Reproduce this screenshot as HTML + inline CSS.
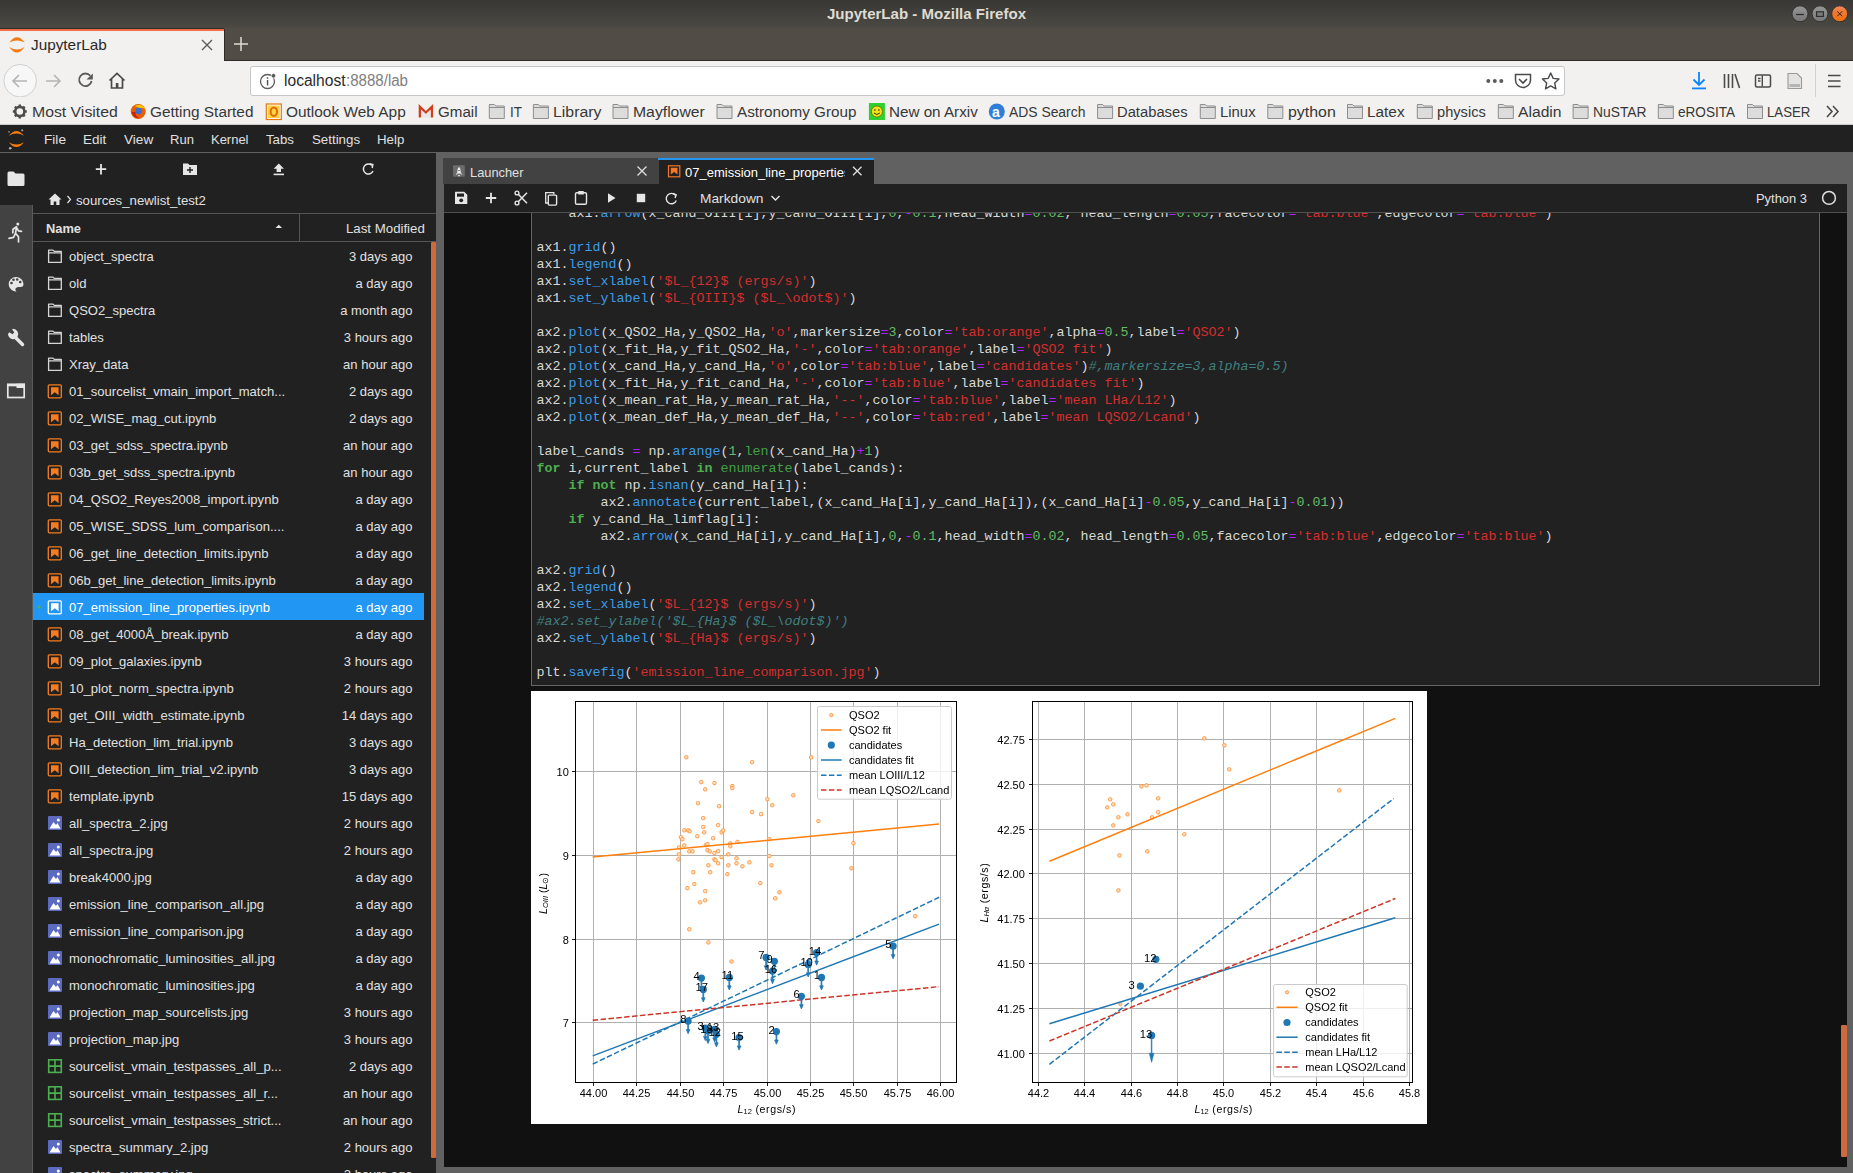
<!DOCTYPE html>
<html><head><meta charset="utf-8"><title>JupyterLab</title>
<style>
html,body{margin:0;padding:0;}
body{width:1853px;height:1173px;overflow:hidden;position:relative;background:#212121;font-family:"Liberation Sans",sans-serif;}
.t{position:absolute;white-space:nowrap;}
.code{position:absolute;white-space:pre;font-family:"Liberation Mono",monospace;font-size:13.33px;line-height:17px;color:#d8d8d8;}
.code b{font-weight:bold;}
</style></head><body>
<div style="position:absolute;left:0;top:0;width:1853px;height:29px;background:linear-gradient(#383734,#4c4a44);"></div>
<div class="t" style="left:827.0px;top:5.9px;font-size:14.5px;color:#dfdbd2;line-height:16.67px;font-weight:bold;transform:scaleX(1.0378);transform-origin:0 0;">JupyterLab - Mozilla Firefox</div>
<svg style="position:absolute;left:1785px;top:0" width="68" height="29" viewBox="1785 0 68 29">
<defs><linearGradient id="wb" x1="0" y1="0" x2="0" y2="1"><stop offset="0" stop-color="#969696"/><stop offset="1" stop-color="#777777"/></linearGradient>
<linearGradient id="wc" x1="0" y1="0" x2="0" y2="1"><stop offset="0" stop-color="#f58a68"/><stop offset="0.35" stop-color="#f07a30"/><stop offset="1" stop-color="#f07010"/></linearGradient></defs>
<circle cx="1800" cy="13.8" r="8" fill="url(#wb)" stroke="#2e2d2a" stroke-width="0.9"/>
<line x1="1796" y1="14.5" x2="1803.8" y2="14.5" stroke="#2a2a2a" stroke-width="1.3"/>
<circle cx="1820" cy="13.8" r="8" fill="url(#wb)" stroke="#2e2d2a" stroke-width="0.9"/>
<rect x="1816.6" y="11.8" width="6.8" height="4.6" fill="#7a7a7a" stroke="#2a2a2a" stroke-width="1.1"/>
<circle cx="1839.7" cy="13.8" r="8" fill="url(#wc)" stroke="#2e2d2a" stroke-width="0.9"/>
<path d="M1837.3 11.4 L1842.1 16.2 M1842.1 11.4 L1837.3 16.2" stroke="#2a1a10" stroke-width="1"/>
</svg>
<div style="position:absolute;left:0;top:28px;width:1853px;height:33px;background:#514d46;"></div>
<div style="position:absolute;left:0;top:28px;width:224px;height:1px;background:#2d2c29;"></div>
<div style="position:absolute;left:0;top:29px;width:224px;height:2px;background:#f26f47;"></div>
<div style="position:absolute;left:0;top:31px;width:224px;height:31px;background:#f2f1ef;"></div>
<div style="position:absolute;left:224px;top:29px;width:1px;height:32px;background:#2c2b28;"></div>
<div style="position:absolute;left:225px;top:60px;width:1628px;height:1px;background:#2c2b28;"></div>
<svg style="position:absolute;left:8px;top:36px" width="18" height="18" viewBox="0 0 18 18">
<path d="M1.3 6.5 Q9 -4.1 16.6 6.5 Q9 2.5 1.3 6.5 Z" fill="#f57a10"/>
<path d="M1.3 11 Q9 22.2 16.6 11 Q9 16 1.3 11 Z" fill="#f57a10"/></svg>
<div class="t" style="left:31.0px;top:36.4px;font-size:15px;color:#2a2a2a;line-height:17.25px;transform:scaleX(1.0213);transform-origin:0 0;">JupyterLab</div>
<svg style="position:absolute;left:200px;top:38px" width="14" height="14" viewBox="0 0 14 14"><path d="M2 2 L12 12 M12 2 L2 12" stroke="#5a5a5a" stroke-width="1.4"/></svg>
<svg style="position:absolute;left:233px;top:36px" width="16" height="16" viewBox="0 0 16 16"><path d="M8 1 V15 M1 8 H15" stroke="#dedbd4" stroke-width="1.5"/></svg>
<div style="position:absolute;left:0;top:61px;width:1853px;height:64px;background:#f2f1ef;"></div>
<svg style="position:absolute;left:0;top:61px" width="140" height="36" viewBox="0 61 140 36">
<circle cx="20.2" cy="80.7" r="16.3" fill="#f7f7f7" stroke="#cfcfcf" stroke-width="1"/>
<path d="M27 81 H13 M19 75 L13 81 L19 87" fill="none" stroke="#b4b4b4" stroke-width="1.6"/>
<path d="M46 81 H60 M54 75 L60 81 L54 87" fill="none" stroke="#b4b4b4" stroke-width="1.6"/>
<path d="M90.3 75.8 A6.3 6.3 0 1 0 91.6 81" fill="none" stroke="#5a5a5a" stroke-width="1.8"/>
<path d="M86.5 79.5 H92.8 V73.5 Z" fill="#5a5a5a"/>
<path d="M109.5 80.5 L117 73.5 L124.5 80.5 M111.5 79 V88 H122.5 V79" fill="none" stroke="#4a4a4a" stroke-width="1.7"/>
<rect x="115.8" y="83" width="2.6" height="5" fill="#4a4a4a"/>
</svg>
<div style="position:absolute;left:0;top:124px;width:1853px;height:1px;background:#cacaca;"></div>
<div style="position:absolute;left:250px;top:66px;width:1315px;height:30px;background:#fff;border:1px solid #c6c6c6;border-radius:3px;box-sizing:border-box;"></div>
<svg style="position:absolute;left:258px;top:72px" width="20" height="20" viewBox="0 0 20 20">
<circle cx="9.5" cy="9.5" r="7" fill="none" stroke="#5a5a5a" stroke-width="1.3"/>
<rect x="8.8" y="8" width="1.5" height="5.5" fill="#5a5a5a"/><rect x="8.8" y="5.2" width="1.5" height="1.6" fill="#5a5a5a"/>
<circle cx="15.5" cy="3.8" r="2.3" fill="#5a5a5a" stroke="#fff" stroke-width="0.8"/></svg>
<div class="t" style="left:283.5px;top:72.3px;font-size:16px;color:#2a2a2a;line-height:18.40px;transform:scaleX(0.9739);transform-origin:0 0;">localhost</div>
<div class="t" style="left:346.0px;top:72.3px;font-size:16px;color:#808080;line-height:18.40px;transform:scaleX(0.9417);transform-origin:0 0;">:8888/lab</div>
<svg style="position:absolute;left:1480px;top:66px" width="90" height="30" viewBox="1480 66 90 30">
<circle cx="1488.3" cy="81" r="2" fill="#5a5a5a"/><circle cx="1494.8" cy="81" r="2" fill="#5a5a5a"/><circle cx="1501.3" cy="81" r="2" fill="#5a5a5a"/>
<path d="M1515.5 74.5 H1530.5 V80 A7.5 7.5 0 0 1 1515.5 80 Z" fill="none" stroke="#4a4a4a" stroke-width="1.5"/>
<path d="M1519 79 L1523 83 L1527 79" fill="none" stroke="#4a4a4a" stroke-width="1.6"/>
<path d="M1550.7 73 L1553.2 78.4 L1559 79 L1554.7 83 L1555.9 88.8 L1550.7 85.9 L1545.5 88.8 L1546.7 83 L1542.4 79 L1548.2 78.4 Z" fill="none" stroke="#4a4a4a" stroke-width="1.4" stroke-linejoin="round"/>
</svg>
<svg style="position:absolute;left:1680px;top:61px" width="173" height="36" viewBox="1680 61 173 36">
<path d="M1699 72 V85 M1693.5 79.5 L1699 85 L1704.5 79.5" fill="none" stroke="#0a84ff" stroke-width="1.8"/>
<rect x="1692" y="87.5" width="14" height="1.8" fill="#0a84ff"/>
<path d="M1724.5 74 V88 M1728.5 74 V88 M1732.5 74 V88 M1735 74 L1739.5 88" fill="none" stroke="#4a4a4a" stroke-width="1.6"/>
<rect x="1755.5" y="75" width="15" height="12" rx="1.5" fill="none" stroke="#4a4a4a" stroke-width="1.5"/>
<path d="M1762.3 75.5 V86.5 M1758 78.5 H1760.5 M1758 81 H1760.5" stroke="#4a4a4a" stroke-width="1.4"/>
<path d="M1788 73.5 H1797 L1801.5 78 V88.5 H1788 Z" fill="#e3e3e3" stroke="#9a9a9a" stroke-width="1.1"/>
<rect x="1789.5" y="84" width="10.5" height="3" fill="#b5b5b5"/>
<rect x="1815" y="64" width="1" height="33" fill="#d0d0d0"/>
<path d="M1828 75.5 H1840.5 M1828 81 H1840.5 M1828 86.5 H1840.5" stroke="#4a4a4a" stroke-width="1.7"/>
</svg>
<svg style="position:absolute;left:0;top:97px" width="1853" height="28" viewBox="0 97 1853 28"><circle cx="19.799999999999997" cy="111.5" r="4.6" fill="none" stroke="#4d4d4d" stroke-width="2.6"/><line x1="24.30" y1="111.50" x2="26.80" y2="111.50" stroke="#4d4d4d" stroke-width="2.4"/><line x1="22.98" y1="114.68" x2="24.75" y2="116.45" stroke="#4d4d4d" stroke-width="2.4"/><line x1="19.80" y1="116.00" x2="19.80" y2="118.50" stroke="#4d4d4d" stroke-width="2.4"/><line x1="16.62" y1="114.68" x2="14.85" y2="116.45" stroke="#4d4d4d" stroke-width="2.4"/><line x1="15.30" y1="111.50" x2="12.80" y2="111.50" stroke="#4d4d4d" stroke-width="2.4"/><line x1="16.62" y1="108.32" x2="14.85" y2="106.55" stroke="#4d4d4d" stroke-width="2.4"/><line x1="19.80" y1="107.00" x2="19.80" y2="104.50" stroke="#4d4d4d" stroke-width="2.4"/><line x1="22.98" y1="108.32" x2="24.75" y2="106.55" stroke="#4d4d4d" stroke-width="2.4"/><circle cx="138.2" cy="111.5" r="7.5" fill="#e66000"/><path d="M134.6 106 Q142.6 103 145.6 110 Q143.6 107 139.6 108 Z" fill="#ffcb00"/><circle cx="138.6" cy="111" r="3.3" fill="#3a6fd8"/><path d="M131.6 112 Q133.6 119 139.6 118 Q134.6 116 135.6 112 Z" fill="#c4230f"/><rect x="266.3" y="104" width="15" height="15.5" fill="#fff" stroke="#e8740c" stroke-width="1.2"/><rect x="267.8" y="105.5" width="12" height="12.5" fill="#ffd24a"/><ellipse cx="273.8" cy="111.7" rx="3.2" ry="4.2" fill="none" stroke="#e06a00" stroke-width="2"/><path d="M419.9 117.5 V106.8 L425.9 112.5 L431.9 106.8 V117.5" fill="none" stroke="#d04020" stroke-width="2.4" stroke-linejoin="miter"/><path d="M421.4 117.5 V110 L425.9 114 L430.4 110 V117.5 Z" fill="#e8e8e8"/><path d="M489.3 104.5 H494.3 L495.8 106 H504.3 V118.5 H489.3 Z" fill="#dcdcdc" stroke="#8e8e8e" stroke-width="1"/><path d="M489.3 107.5 H504.3" stroke="#8e8e8e" stroke-width="1"/><path d="M533.4 104.5 H538.4 L539.9 106 H548.4 V118.5 H533.4 Z" fill="#dcdcdc" stroke="#8e8e8e" stroke-width="1"/><path d="M533.4 107.5 H548.4" stroke="#8e8e8e" stroke-width="1"/><path d="M613.0 104.5 H618.0 L619.5 106 H628.0 V118.5 H613.0 Z" fill="#dcdcdc" stroke="#8e8e8e" stroke-width="1"/><path d="M613.0 107.5 H628.0" stroke="#8e8e8e" stroke-width="1"/><path d="M717.0 104.5 H722.0 L723.5 106 H732.0 V118.5 H717.0 Z" fill="#dcdcdc" stroke="#8e8e8e" stroke-width="1"/><path d="M717.0 107.5 H732.0" stroke="#8e8e8e" stroke-width="1"/><rect x="868.9" y="103" width="16" height="17" fill="#2fd02f"/><circle cx="876.9" cy="111.5" r="5.5" fill="#f4e21a" stroke="#6a5a00" stroke-width="0.7"/><circle cx="874.9" cy="110" r="0.8" fill="#222"/><circle cx="878.9" cy="110" r="0.8" fill="#222"/><path d="M873.9 113 Q876.9 116 879.9 113" fill="none" stroke="#222" stroke-width="0.9"/><circle cx="996.8" cy="111.5" r="8" fill="#2f7fd8"/><text x="992.0" y="116.5" font-family="Liberation Sans" font-size="14" font-weight="bold" fill="#fff">a</text><path d="M1097.6 104.5 H1102.6 L1104.1 106 H1112.6 V118.5 H1097.6 Z" fill="#dcdcdc" stroke="#8e8e8e" stroke-width="1"/><path d="M1097.6 107.5 H1112.6" stroke="#8e8e8e" stroke-width="1"/><path d="M1200.3 104.5 H1205.3 L1206.8 106 H1215.3 V118.5 H1200.3 Z" fill="#dcdcdc" stroke="#8e8e8e" stroke-width="1"/><path d="M1200.3 107.5 H1215.3" stroke="#8e8e8e" stroke-width="1"/><path d="M1267.8 104.5 H1272.8 L1274.3 106 H1282.8 V118.5 H1267.8 Z" fill="#dcdcdc" stroke="#8e8e8e" stroke-width="1"/><path d="M1267.8 107.5 H1282.8" stroke="#8e8e8e" stroke-width="1"/><path d="M1347.5 104.5 H1352.5 L1354 106 H1362.5 V118.5 H1347.5 Z" fill="#dcdcdc" stroke="#8e8e8e" stroke-width="1"/><path d="M1347.5 107.5 H1362.5" stroke="#8e8e8e" stroke-width="1"/><path d="M1417.3 104.5 H1422.3 L1423.8 106 H1432.3 V118.5 H1417.3 Z" fill="#dcdcdc" stroke="#8e8e8e" stroke-width="1"/><path d="M1417.3 107.5 H1432.3" stroke="#8e8e8e" stroke-width="1"/><path d="M1498.3 104.5 H1503.3 L1504.8 106 H1513.3 V118.5 H1498.3 Z" fill="#dcdcdc" stroke="#8e8e8e" stroke-width="1"/><path d="M1498.3 107.5 H1513.3" stroke="#8e8e8e" stroke-width="1"/><path d="M1573.1 104.5 H1578.1 L1579.6 106 H1588.1 V118.5 H1573.1 Z" fill="#dcdcdc" stroke="#8e8e8e" stroke-width="1"/><path d="M1573.1 107.5 H1588.1" stroke="#8e8e8e" stroke-width="1"/><path d="M1658.3 104.5 H1663.3 L1664.8 106 H1673.3 V118.5 H1658.3 Z" fill="#dcdcdc" stroke="#8e8e8e" stroke-width="1"/><path d="M1658.3 107.5 H1673.3" stroke="#8e8e8e" stroke-width="1"/><path d="M1747.5 104.5 H1752.5 L1754 106 H1762.5 V118.5 H1747.5 Z" fill="#dcdcdc" stroke="#8e8e8e" stroke-width="1"/><path d="M1747.5 107.5 H1762.5" stroke="#8e8e8e" stroke-width="1"/><path d="M1827 106 L1832 111.5 L1827 117 M1833 106 L1838 111.5 L1833 117" fill="none" stroke="#4a4a4a" stroke-width="1.6"/></svg>
<div class="t" style="left:32.2px;top:103.0px;font-size:15.4px;color:#383838;line-height:17.71px;transform:scaleX(1.0264);transform-origin:0 0;">Most Visited</div>
<div class="t" style="left:150.4px;top:103.0px;font-size:15.4px;color:#383838;line-height:17.71px;transform:scaleX(0.9992);transform-origin:0 0;">Getting Started</div>
<div class="t" style="left:286.0px;top:103.0px;font-size:15.4px;color:#383838;line-height:17.71px;transform:scaleX(1.0019);transform-origin:0 0;">Outlook Web App</div>
<div class="t" style="left:438.0px;top:103.0px;font-size:15.4px;color:#383838;line-height:17.71px;transform:scaleX(0.9847);transform-origin:0 0;">Gmail</div>
<div class="t" style="left:509.6px;top:103.0px;font-size:15.4px;color:#383838;line-height:17.71px;transform:scaleX(0.8695);transform-origin:0 0;">IT</div>
<div class="t" style="left:553.4px;top:103.0px;font-size:15.4px;color:#383838;line-height:17.71px;transform:scaleX(1.0303);transform-origin:0 0;">Library</div>
<div class="t" style="left:633.3px;top:103.0px;font-size:15.4px;color:#383838;line-height:17.71px;transform:scaleX(1.0232);transform-origin:0 0;">Mayflower</div>
<div class="t" style="left:737.3px;top:103.0px;font-size:15.4px;color:#383838;line-height:17.71px;transform:scaleX(0.9902);transform-origin:0 0;">Astronomy Group</div>
<div class="t" style="left:889.2px;top:103.0px;font-size:15.4px;color:#383838;line-height:17.71px;transform:scaleX(0.9881);transform-origin:0 0;">New on Arxiv</div>
<div class="t" style="left:1009.1px;top:103.0px;font-size:15.4px;color:#383838;line-height:17.71px;transform:scaleX(0.9016);transform-origin:0 0;">ADS Search</div>
<div class="t" style="left:1117.4px;top:103.0px;font-size:15.4px;color:#383838;line-height:17.71px;transform:scaleX(0.9589);transform-origin:0 0;">Databases</div>
<div class="t" style="left:1220.1px;top:103.0px;font-size:15.4px;color:#383838;line-height:17.71px;transform:scaleX(0.9670);transform-origin:0 0;">Linux</div>
<div class="t" style="left:1288.4px;top:103.0px;font-size:15.4px;color:#383838;line-height:17.71px;transform:scaleX(1.0338);transform-origin:0 0;">python</div>
<div class="t" style="left:1367.2px;top:103.0px;font-size:15.4px;color:#383838;line-height:17.71px;transform:scaleX(0.9981);transform-origin:0 0;">Latex</div>
<div class="t" style="left:1437.0px;top:103.0px;font-size:15.4px;color:#383838;line-height:17.71px;transform:scaleX(0.9503);transform-origin:0 0;">physics</div>
<div class="t" style="left:1518.0px;top:103.0px;font-size:15.4px;color:#383838;line-height:17.71px;transform:scaleX(1.0185);transform-origin:0 0;">Aladin</div>
<div class="t" style="left:1592.8px;top:103.0px;font-size:15.4px;color:#383838;line-height:17.71px;transform:scaleX(0.8991);transform-origin:0 0;">NuSTAR</div>
<div class="t" style="left:1677.9px;top:103.0px;font-size:15.4px;color:#383838;line-height:17.71px;transform:scaleX(0.8818);transform-origin:0 0;">eROSITA</div>
<div class="t" style="left:1767.2px;top:103.0px;font-size:15.4px;color:#383838;line-height:17.71px;transform:scaleX(0.8594);transform-origin:0 0;">LASER</div>
<div style="position:absolute;left:0;top:125px;width:1853px;height:1048px;background:#212121;"></div>
<div style="position:absolute;left:0;top:152px;width:1853px;height:1px;background:#616161;"></div>
<svg style="position:absolute;left:5px;top:127px" width="24" height="25" viewBox="0 0 24 25">
<path d="M3.8 8.7 Q11.4 -0.9 19 8.7 Q11.4 4.5 3.8 8.7 Z" fill="#f57a10"/>
<path d="M3.8 15.2 Q11.4 25 19 15.2 Q11.4 19.6 3.8 15.2 Z" fill="#f57a10"/>
<circle cx="4" cy="4.8" r="0.9" fill="#8a8a8a"/><circle cx="17.2" cy="3.3" r="1.1" fill="#9a9a9a"/><circle cx="5.2" cy="21.3" r="1.3" fill="#aaaaaa"/>
</svg>
<div class="t" style="left:43.6px;top:132.2px;font-size:13.4px;color:#e0e0e0;line-height:15.41px;transform:scaleX(1.0189);transform-origin:0 0;">File</div>
<div class="t" style="left:82.8px;top:132.2px;font-size:13.4px;color:#e0e0e0;line-height:15.41px;transform:scaleX(1.0048);transform-origin:0 0;">Edit</div>
<div class="t" style="left:123.6px;top:132.2px;font-size:13.4px;color:#e0e0e0;line-height:15.41px;transform:scaleX(1.0173);transform-origin:0 0;">View</div>
<div class="t" style="left:169.8px;top:132.2px;font-size:13.4px;color:#e0e0e0;line-height:15.41px;transform:scaleX(0.9723);transform-origin:0 0;">Run</div>
<div class="t" style="left:210.6px;top:132.2px;font-size:13.4px;color:#e0e0e0;line-height:15.41px;transform:scaleX(0.9681);transform-origin:0 0;">Kernel</div>
<div class="t" style="left:265.7px;top:132.2px;font-size:13.4px;color:#e0e0e0;line-height:15.41px;transform:scaleX(0.9892);transform-origin:0 0;">Tabs</div>
<div class="t" style="left:311.7px;top:132.2px;font-size:13.4px;color:#e0e0e0;line-height:15.41px;transform:scaleX(0.9934);transform-origin:0 0;">Settings</div>
<div class="t" style="left:377.4px;top:132.2px;font-size:13.4px;color:#e0e0e0;line-height:15.41px;transform:scaleX(0.9906);transform-origin:0 0;">Help</div>
<div style="position:absolute;left:0;top:205px;width:32px;height:968px;background:#424242;"></div>
<div style="position:absolute;left:32px;top:205px;width:1px;height:968px;background:#5a5a5a;"></div>
<svg style="position:absolute;left:0;top:153px" width="33" height="260" viewBox="0 153 33 260">
<path d="M7.5 173 Q7.5 171.5 9 171.5 H13.5 L15.5 173.5 H23 Q24.5 173.5 24.5 175 V184.5 Q24.5 186 23 186 H9 Q7.5 186 7.5 184.5 Z" fill="#e6e6e6"/>
<g transform="translate(0,1.8)"><circle cx="17.8" cy="222.3" r="1.5" fill="#e6e6e6"/>
<path d="M16.5 225 L13 227.5 L12.8 231 M16.5 225 L15.5 231.5 L18.5 235 L18.5 240 M15.5 231.5 L13.5 235.5 L9 236.5 M16.5 225.5 L18.5 229 L21.5 229.5" fill="none" stroke="#e6e6e6" stroke-width="1.7" stroke-linejoin="round" stroke-linecap="round"/></g>
<path d="M16 277 A7.5 7.2 0 1 0 16.5 291.5 Q14.5 289.5 16 288 Q17.5 286.5 20 287 Q23.5 287.5 23.5 284 A7.5 7.2 0 0 0 16 277 Z" fill="#e6e6e6"/>
<circle cx="11.5" cy="283" r="1.3" fill="#424242"/><circle cx="13.5" cy="279.8" r="1.3" fill="#424242"/><circle cx="17.2" cy="279.5" r="1.3" fill="#424242"/><circle cx="20.2" cy="282" r="1.3" fill="#424242"/>
<path d="M14.5 336.5 L22.5 344.5" stroke="#e6e6e6" stroke-width="3.4" stroke-linecap="round"/><path d="M8 334 A5.3 5.3 0 0 0 15.8 338.6 L17.5 336.8 A5.3 5.3 0 0 0 12.8 328.8 L12.2 329.4 L14.3 332.5 L12.5 334.3 L9.3 332.3 Z" fill="#e6e6e6"/>
<rect x="7.8" y="384.5" width="16.4" height="13" fill="none" stroke="#e6e6e6" stroke-width="1.7"/>
<rect x="7" y="383.7" width="18" height="2.6" fill="#e6e6e6"/><rect x="16.5" y="383.7" width="8.5" height="4.3" fill="#e6e6e6"/>
</svg>
<svg style="position:absolute;left:33px;top:153px" width="400" height="90" viewBox="33 153 400 90">
<path d="M101 164 V174.5 M95.8 169.2 H106.2" stroke="#e6e6e6" stroke-width="1.8"/>
<path d="M183 163.5 H188 L189.5 165 H197 V175 H183 Z" fill="#e6e6e6"/>
<path d="M190 167 V173 M187 170 H193" stroke="#212121" stroke-width="1.4"/>
<path d="M278.8 163.5 L284 168.8 H281 V172 H276.6 V168.8 H273.6 Z" fill="#e6e6e6"/><rect x="273.6" y="173.6" width="10.4" height="1.6" fill="#e6e6e6"/>
<path d="M372 165.5 A5 5 0 1 0 373 171" fill="none" stroke="#e6e6e6" stroke-width="1.5"/>
<path d="M369.5 163.8 L372.8 164.6 L372.2 168" fill="none" stroke="#e6e6e6" stroke-width="1.5"/>
<path d="M48.5 199.5 L55 193.5 L61.5 199.5 H59.5 V205 H56.3 V201.5 H53.7 V205 H50.5 V199.5 Z" fill="#e6e6e6"/>
<path d="M67.5 196 L70.5 199.5 L67.5 203" fill="none" stroke="#e6e6e6" stroke-width="1.2"/>
<path d="M275.5 228 L278.8 224.8 L282.1 228 Z" fill="#e6e6e6"/>
</svg>
<div class="t" style="left:76.0px;top:193.1px;font-size:13.2px;color:#e0e0e0;line-height:15.18px;transform:scaleX(1.0010);transform-origin:0 0;">sources_newlist_test2</div>
<div style="position:absolute;left:33px;top:213px;width:403px;height:1px;background:#555;"></div>
<div style="position:absolute;left:33px;top:241px;width:403px;height:1px;background:#555;"></div>
<div style="position:absolute;left:299px;top:214px;width:1px;height:27px;background:#555;"></div>
<div class="t" style="left:45.5px;top:222.2px;font-size:13px;color:#e0e0e0;line-height:14.95px;font-weight:bold;transform:scaleX(0.9885);transform-origin:0 0;">Name</div>
<div class="t" style="left:346.0px;top:222.2px;font-size:13px;color:#e0e0e0;line-height:14.95px;transform:scaleX(1.0191);transform-origin:0 0;">Last Modified</div>
<div style="position:absolute;left:33px;top:242px;width:398px;height:931px;overflow:hidden;">
<svg style="position:absolute;left:0;top:0" width="398" height="931" viewBox="33 242 398 931"><path d="M48.6 250.10000000000002 H53 L54.3 251.40000000000003 H61.3 V262.40000000000003 H48.6 Z M48.6 252.90000000000003 H61.3" fill="none" stroke="#d6d6d6" stroke-width="1.3" stroke-linejoin="round"/><path d="M48.6 277.1 H53 L54.3 278.40000000000003 H61.3 V289.40000000000003 H48.6 Z M48.6 279.90000000000003 H61.3" fill="none" stroke="#d6d6d6" stroke-width="1.3" stroke-linejoin="round"/><path d="M48.6 304.1 H53 L54.3 305.40000000000003 H61.3 V316.40000000000003 H48.6 Z M48.6 306.90000000000003 H61.3" fill="none" stroke="#d6d6d6" stroke-width="1.3" stroke-linejoin="round"/><path d="M48.6 331.1 H53 L54.3 332.40000000000003 H61.3 V343.40000000000003 H48.6 Z M48.6 333.90000000000003 H61.3" fill="none" stroke="#d6d6d6" stroke-width="1.3" stroke-linejoin="round"/><path d="M48.6 358.1 H53 L54.3 359.40000000000003 H61.3 V370.40000000000003 H48.6 Z M48.6 360.90000000000003 H61.3" fill="none" stroke="#d6d6d6" stroke-width="1.3" stroke-linejoin="round"/><rect x="48.3" y="384.8" width="13" height="13" rx="1" fill="none" stroke="#f57c1f" stroke-width="1.3"/><path d="M51 387.3 H58.6 V395.3 L54.8 392.3 L51 395.3 Z" fill="#f57c1f"/><rect x="48.3" y="411.8" width="13" height="13" rx="1" fill="none" stroke="#f57c1f" stroke-width="1.3"/><path d="M51 414.3 H58.6 V422.3 L54.8 419.3 L51 422.3 Z" fill="#f57c1f"/><rect x="48.3" y="438.8" width="13" height="13" rx="1" fill="none" stroke="#f57c1f" stroke-width="1.3"/><path d="M51 441.3 H58.6 V449.3 L54.8 446.3 L51 449.3 Z" fill="#f57c1f"/><rect x="48.3" y="465.8" width="13" height="13" rx="1" fill="none" stroke="#f57c1f" stroke-width="1.3"/><path d="M51 468.3 H58.6 V476.3 L54.8 473.3 L51 476.3 Z" fill="#f57c1f"/><rect x="48.3" y="492.8" width="13" height="13" rx="1" fill="none" stroke="#f57c1f" stroke-width="1.3"/><path d="M51 495.3 H58.6 V503.3 L54.8 500.3 L51 503.3 Z" fill="#f57c1f"/><rect x="48.3" y="519.8000000000001" width="13" height="13" rx="1" fill="none" stroke="#f57c1f" stroke-width="1.3"/><path d="M51 522.3000000000001 H58.6 V530.3000000000001 L54.8 527.3000000000001 L51 530.3000000000001 Z" fill="#f57c1f"/><rect x="48.3" y="546.8000000000001" width="13" height="13" rx="1" fill="none" stroke="#f57c1f" stroke-width="1.3"/><path d="M51 549.3000000000001 H58.6 V557.3000000000001 L54.8 554.3000000000001 L51 557.3000000000001 Z" fill="#f57c1f"/><rect x="48.3" y="573.8000000000001" width="13" height="13" rx="1" fill="none" stroke="#f57c1f" stroke-width="1.3"/><path d="M51 576.3000000000001 H58.6 V584.3000000000001 L54.8 581.3000000000001 L51 584.3000000000001 Z" fill="#f57c1f"/><rect x="33" y="593" width="391" height="27" fill="#2196f3"/><circle cx="39" cy="607.1" r="1.6" fill="#4caf50"/><rect x="48.3" y="600.8000000000001" width="13" height="13" rx="1" fill="none" stroke="#ffffff" stroke-width="1.3"/><path d="M51 603.3000000000001 H58.6 V611.3000000000001 L54.8 608.3000000000001 L51 611.3000000000001 Z" fill="#ffffff"/><rect x="48.3" y="627.8000000000001" width="13" height="13" rx="1" fill="none" stroke="#f57c1f" stroke-width="1.3"/><path d="M51 630.3000000000001 H58.6 V638.3000000000001 L54.8 635.3000000000001 L51 638.3000000000001 Z" fill="#f57c1f"/><rect x="48.3" y="654.8000000000001" width="13" height="13" rx="1" fill="none" stroke="#f57c1f" stroke-width="1.3"/><path d="M51 657.3000000000001 H58.6 V665.3000000000001 L54.8 662.3000000000001 L51 665.3000000000001 Z" fill="#f57c1f"/><rect x="48.3" y="681.8000000000001" width="13" height="13" rx="1" fill="none" stroke="#f57c1f" stroke-width="1.3"/><path d="M51 684.3000000000001 H58.6 V692.3000000000001 L54.8 689.3000000000001 L51 692.3000000000001 Z" fill="#f57c1f"/><rect x="48.3" y="708.8000000000001" width="13" height="13" rx="1" fill="none" stroke="#f57c1f" stroke-width="1.3"/><path d="M51 711.3000000000001 H58.6 V719.3000000000001 L54.8 716.3000000000001 L51 719.3000000000001 Z" fill="#f57c1f"/><rect x="48.3" y="735.8000000000001" width="13" height="13" rx="1" fill="none" stroke="#f57c1f" stroke-width="1.3"/><path d="M51 738.3000000000001 H58.6 V746.3000000000001 L54.8 743.3000000000001 L51 746.3000000000001 Z" fill="#f57c1f"/><rect x="48.3" y="762.8000000000001" width="13" height="13" rx="1" fill="none" stroke="#f57c1f" stroke-width="1.3"/><path d="M51 765.3000000000001 H58.6 V773.3000000000001 L54.8 770.3000000000001 L51 773.3000000000001 Z" fill="#f57c1f"/><rect x="48.3" y="789.8000000000001" width="13" height="13" rx="1" fill="none" stroke="#f57c1f" stroke-width="1.3"/><path d="M51 792.3000000000001 H58.6 V800.3000000000001 L54.8 797.3000000000001 L51 800.3000000000001 Z" fill="#f57c1f"/><rect x="48" y="816.1" width="14" height="14" rx="1" fill="#5c6bc0"/><path d="M49.5 828.6 L53.5 822.1 L56 825.1 L57.5 823.1 L60.5 828.6 Z" fill="#fff"/><circle cx="58.3" cy="820.1" r="1.5" fill="#fff"/><rect x="48" y="843.1" width="14" height="14" rx="1" fill="#5c6bc0"/><path d="M49.5 855.6 L53.5 849.1 L56 852.1 L57.5 850.1 L60.5 855.6 Z" fill="#fff"/><circle cx="58.3" cy="847.1" r="1.5" fill="#fff"/><rect x="48" y="870.1" width="14" height="14" rx="1" fill="#5c6bc0"/><path d="M49.5 882.6 L53.5 876.1 L56 879.1 L57.5 877.1 L60.5 882.6 Z" fill="#fff"/><circle cx="58.3" cy="874.1" r="1.5" fill="#fff"/><rect x="48" y="897.1" width="14" height="14" rx="1" fill="#5c6bc0"/><path d="M49.5 909.6 L53.5 903.1 L56 906.1 L57.5 904.1 L60.5 909.6 Z" fill="#fff"/><circle cx="58.3" cy="901.1" r="1.5" fill="#fff"/><rect x="48" y="924.1" width="14" height="14" rx="1" fill="#5c6bc0"/><path d="M49.5 936.6 L53.5 930.1 L56 933.1 L57.5 931.1 L60.5 936.6 Z" fill="#fff"/><circle cx="58.3" cy="928.1" r="1.5" fill="#fff"/><rect x="48" y="951.1" width="14" height="14" rx="1" fill="#5c6bc0"/><path d="M49.5 963.6 L53.5 957.1 L56 960.1 L57.5 958.1 L60.5 963.6 Z" fill="#fff"/><circle cx="58.3" cy="955.1" r="1.5" fill="#fff"/><rect x="48" y="978.1" width="14" height="14" rx="1" fill="#5c6bc0"/><path d="M49.5 990.6 L53.5 984.1 L56 987.1 L57.5 985.1 L60.5 990.6 Z" fill="#fff"/><circle cx="58.3" cy="982.1" r="1.5" fill="#fff"/><rect x="48" y="1005.1" width="14" height="14" rx="1" fill="#5c6bc0"/><path d="M49.5 1017.6 L53.5 1011.1 L56 1014.1 L57.5 1012.1 L60.5 1017.6 Z" fill="#fff"/><circle cx="58.3" cy="1009.1" r="1.5" fill="#fff"/><rect x="48" y="1032.1" width="14" height="14" rx="1" fill="#5c6bc0"/><path d="M49.5 1044.6 L53.5 1038.1 L56 1041.1 L57.5 1039.1 L60.5 1044.6 Z" fill="#fff"/><circle cx="58.3" cy="1036.1" r="1.5" fill="#fff"/><rect x="48.7" y="1059.8" width="12.6" height="12.6" fill="none" stroke="#4caf50" stroke-width="1.6"/><path d="M55 1059.8 V1072.3999999999999 M48.7 1066.1 H61.3" stroke="#4caf50" stroke-width="1.6"/><rect x="48.7" y="1086.8" width="12.6" height="12.6" fill="none" stroke="#4caf50" stroke-width="1.6"/><path d="M55 1086.8 V1099.3999999999999 M48.7 1093.1 H61.3" stroke="#4caf50" stroke-width="1.6"/><rect x="48.7" y="1113.8" width="12.6" height="12.6" fill="none" stroke="#4caf50" stroke-width="1.6"/><path d="M55 1113.8 V1126.3999999999999 M48.7 1120.1 H61.3" stroke="#4caf50" stroke-width="1.6"/><rect x="48" y="1140.1" width="14" height="14" rx="1" fill="#5c6bc0"/><path d="M49.5 1152.6 L53.5 1146.1 L56 1149.1 L57.5 1147.1 L60.5 1152.6 Z" fill="#fff"/><circle cx="58.3" cy="1144.1" r="1.5" fill="#fff"/><rect x="48" y="1167.1" width="14" height="14" rx="1" fill="#5c6bc0"/><path d="M49.5 1179.6 L53.5 1173.1 L56 1176.1 L57.5 1174.1 L60.5 1179.6 Z" fill="#fff"/><circle cx="58.3" cy="1171.1" r="1.5" fill="#fff"/></svg>
<div class="t" style="left:36.0px;top:7.5px;font-size:13px;color:#e0e0e0;line-height:14.95px;transform:scaleX(1.0038);transform-origin:0 0;">object_spectra</div>
<div class="t" style="left:315.9px;top:7.5px;font-size:13px;color:#e0e0e0;line-height:14.95px;">3 days ago</div>
<div class="t" style="left:36.0px;top:34.5px;font-size:13px;color:#e0e0e0;line-height:14.95px;transform:scaleX(1.0038);transform-origin:0 0;">old</div>
<div class="t" style="left:322.4px;top:34.5px;font-size:13px;color:#e0e0e0;line-height:14.95px;">a day ago</div>
<div class="t" style="left:36.0px;top:61.5px;font-size:13px;color:#e0e0e0;line-height:14.95px;transform:scaleX(1.0038);transform-origin:0 0;">QSO2_spectra</div>
<div class="t" style="left:307.2px;top:61.5px;font-size:13px;color:#e0e0e0;line-height:14.95px;">a month ago</div>
<div class="t" style="left:36.0px;top:88.5px;font-size:13px;color:#e0e0e0;line-height:14.95px;transform:scaleX(1.0038);transform-origin:0 0;">tables</div>
<div class="t" style="left:310.8px;top:88.5px;font-size:13px;color:#e0e0e0;line-height:14.95px;">3 hours ago</div>
<div class="t" style="left:36.0px;top:115.5px;font-size:13px;color:#e0e0e0;line-height:14.95px;transform:scaleX(1.0038);transform-origin:0 0;">Xray_data</div>
<div class="t" style="left:310.1px;top:115.5px;font-size:13px;color:#e0e0e0;line-height:14.95px;">an hour ago</div>
<div class="t" style="left:36.0px;top:142.5px;font-size:13px;color:#e0e0e0;line-height:14.95px;transform:scaleX(1.0038);transform-origin:0 0;">01_sourcelist_vmain_import_match...</div>
<div class="t" style="left:315.9px;top:142.5px;font-size:13px;color:#e0e0e0;line-height:14.95px;">2 days ago</div>
<div class="t" style="left:36.0px;top:169.5px;font-size:13px;color:#e0e0e0;line-height:14.95px;transform:scaleX(1.0038);transform-origin:0 0;">02_WISE_mag_cut.ipynb</div>
<div class="t" style="left:315.9px;top:169.5px;font-size:13px;color:#e0e0e0;line-height:14.95px;">2 days ago</div>
<div class="t" style="left:36.0px;top:196.5px;font-size:13px;color:#e0e0e0;line-height:14.95px;transform:scaleX(1.0038);transform-origin:0 0;">03_get_sdss_spectra.ipynb</div>
<div class="t" style="left:310.1px;top:196.5px;font-size:13px;color:#e0e0e0;line-height:14.95px;">an hour ago</div>
<div class="t" style="left:36.0px;top:223.5px;font-size:13px;color:#e0e0e0;line-height:14.95px;transform:scaleX(1.0038);transform-origin:0 0;">03b_get_sdss_spectra.ipynb</div>
<div class="t" style="left:310.1px;top:223.5px;font-size:13px;color:#e0e0e0;line-height:14.95px;">an hour ago</div>
<div class="t" style="left:36.0px;top:250.5px;font-size:13px;color:#e0e0e0;line-height:14.95px;transform:scaleX(1.0038);transform-origin:0 0;">04_QSO2_Reyes2008_import.ipynb</div>
<div class="t" style="left:322.4px;top:250.5px;font-size:13px;color:#e0e0e0;line-height:14.95px;">a day ago</div>
<div class="t" style="left:36.0px;top:277.5px;font-size:13px;color:#e0e0e0;line-height:14.95px;transform:scaleX(1.0038);transform-origin:0 0;">05_WISE_SDSS_lum_comparison....</div>
<div class="t" style="left:322.4px;top:277.5px;font-size:13px;color:#e0e0e0;line-height:14.95px;">a day ago</div>
<div class="t" style="left:36.0px;top:304.5px;font-size:13px;color:#e0e0e0;line-height:14.95px;transform:scaleX(1.0038);transform-origin:0 0;">06_get_line_detection_limits.ipynb</div>
<div class="t" style="left:322.4px;top:304.5px;font-size:13px;color:#e0e0e0;line-height:14.95px;">a day ago</div>
<div class="t" style="left:36.0px;top:331.5px;font-size:13px;color:#e0e0e0;line-height:14.95px;transform:scaleX(1.0038);transform-origin:0 0;">06b_get_line_detection_limits.ipynb</div>
<div class="t" style="left:322.4px;top:331.5px;font-size:13px;color:#e0e0e0;line-height:14.95px;">a day ago</div>
<div class="t" style="left:36.0px;top:358.5px;font-size:13px;color:#ffffff;line-height:14.95px;transform:scaleX(1.0038);transform-origin:0 0;">07_emission_line_properties.ipynb</div>
<div class="t" style="left:322.4px;top:358.5px;font-size:13px;color:#ffffff;line-height:14.95px;">a day ago</div>
<div class="t" style="left:36.0px;top:385.5px;font-size:13px;color:#e0e0e0;line-height:14.95px;transform:scaleX(1.0038);transform-origin:0 0;">08_get_4000Å_break.ipynb</div>
<div class="t" style="left:322.4px;top:385.5px;font-size:13px;color:#e0e0e0;line-height:14.95px;">a day ago</div>
<div class="t" style="left:36.0px;top:412.5px;font-size:13px;color:#e0e0e0;line-height:14.95px;transform:scaleX(1.0038);transform-origin:0 0;">09_plot_galaxies.ipynb</div>
<div class="t" style="left:310.8px;top:412.5px;font-size:13px;color:#e0e0e0;line-height:14.95px;">3 hours ago</div>
<div class="t" style="left:36.0px;top:439.5px;font-size:13px;color:#e0e0e0;line-height:14.95px;transform:scaleX(1.0038);transform-origin:0 0;">10_plot_norm_spectra.ipynb</div>
<div class="t" style="left:310.8px;top:439.5px;font-size:13px;color:#e0e0e0;line-height:14.95px;">2 hours ago</div>
<div class="t" style="left:36.0px;top:466.5px;font-size:13px;color:#e0e0e0;line-height:14.95px;transform:scaleX(1.0038);transform-origin:0 0;">get_OIII_width_estimate.ipynb</div>
<div class="t" style="left:308.7px;top:466.5px;font-size:13px;color:#e0e0e0;line-height:14.95px;">14 days ago</div>
<div class="t" style="left:36.0px;top:493.5px;font-size:13px;color:#e0e0e0;line-height:14.95px;transform:scaleX(1.0038);transform-origin:0 0;">Ha_detection_lim_trial.ipynb</div>
<div class="t" style="left:315.9px;top:493.5px;font-size:13px;color:#e0e0e0;line-height:14.95px;">3 days ago</div>
<div class="t" style="left:36.0px;top:520.5px;font-size:13px;color:#e0e0e0;line-height:14.95px;transform:scaleX(1.0038);transform-origin:0 0;">OIII_detection_lim_trial_v2.ipynb</div>
<div class="t" style="left:315.9px;top:520.5px;font-size:13px;color:#e0e0e0;line-height:14.95px;">3 days ago</div>
<div class="t" style="left:36.0px;top:547.5px;font-size:13px;color:#e0e0e0;line-height:14.95px;transform:scaleX(1.0038);transform-origin:0 0;">template.ipynb</div>
<div class="t" style="left:308.7px;top:547.5px;font-size:13px;color:#e0e0e0;line-height:14.95px;">15 days ago</div>
<div class="t" style="left:36.0px;top:574.5px;font-size:13px;color:#e0e0e0;line-height:14.95px;transform:scaleX(1.0038);transform-origin:0 0;">all_spectra_2.jpg</div>
<div class="t" style="left:310.8px;top:574.5px;font-size:13px;color:#e0e0e0;line-height:14.95px;">2 hours ago</div>
<div class="t" style="left:36.0px;top:601.5px;font-size:13px;color:#e0e0e0;line-height:14.95px;transform:scaleX(1.0038);transform-origin:0 0;">all_spectra.jpg</div>
<div class="t" style="left:310.8px;top:601.5px;font-size:13px;color:#e0e0e0;line-height:14.95px;">2 hours ago</div>
<div class="t" style="left:36.0px;top:628.5px;font-size:13px;color:#e0e0e0;line-height:14.95px;transform:scaleX(1.0038);transform-origin:0 0;">break4000.jpg</div>
<div class="t" style="left:322.4px;top:628.5px;font-size:13px;color:#e0e0e0;line-height:14.95px;">a day ago</div>
<div class="t" style="left:36.0px;top:655.5px;font-size:13px;color:#e0e0e0;line-height:14.95px;transform:scaleX(1.0038);transform-origin:0 0;">emission_line_comparison_all.jpg</div>
<div class="t" style="left:322.4px;top:655.5px;font-size:13px;color:#e0e0e0;line-height:14.95px;">a day ago</div>
<div class="t" style="left:36.0px;top:682.5px;font-size:13px;color:#e0e0e0;line-height:14.95px;transform:scaleX(1.0038);transform-origin:0 0;">emission_line_comparison.jpg</div>
<div class="t" style="left:322.4px;top:682.5px;font-size:13px;color:#e0e0e0;line-height:14.95px;">a day ago</div>
<div class="t" style="left:36.0px;top:709.5px;font-size:13px;color:#e0e0e0;line-height:14.95px;transform:scaleX(1.0038);transform-origin:0 0;">monochromatic_luminosities_all.jpg</div>
<div class="t" style="left:322.4px;top:709.5px;font-size:13px;color:#e0e0e0;line-height:14.95px;">a day ago</div>
<div class="t" style="left:36.0px;top:736.5px;font-size:13px;color:#e0e0e0;line-height:14.95px;transform:scaleX(1.0038);transform-origin:0 0;">monochromatic_luminosities.jpg</div>
<div class="t" style="left:322.4px;top:736.5px;font-size:13px;color:#e0e0e0;line-height:14.95px;">a day ago</div>
<div class="t" style="left:36.0px;top:763.5px;font-size:13px;color:#e0e0e0;line-height:14.95px;transform:scaleX(1.0038);transform-origin:0 0;">projection_map_sourcelists.jpg</div>
<div class="t" style="left:310.8px;top:763.5px;font-size:13px;color:#e0e0e0;line-height:14.95px;">3 hours ago</div>
<div class="t" style="left:36.0px;top:790.5px;font-size:13px;color:#e0e0e0;line-height:14.95px;transform:scaleX(1.0038);transform-origin:0 0;">projection_map.jpg</div>
<div class="t" style="left:310.8px;top:790.5px;font-size:13px;color:#e0e0e0;line-height:14.95px;">3 hours ago</div>
<div class="t" style="left:36.0px;top:817.5px;font-size:13px;color:#e0e0e0;line-height:14.95px;transform:scaleX(1.0038);transform-origin:0 0;">sourcelist_vmain_testpasses_all_p...</div>
<div class="t" style="left:315.9px;top:817.5px;font-size:13px;color:#e0e0e0;line-height:14.95px;">2 days ago</div>
<div class="t" style="left:36.0px;top:844.5px;font-size:13px;color:#e0e0e0;line-height:14.95px;transform:scaleX(1.0038);transform-origin:0 0;">sourcelist_vmain_testpasses_all_r...</div>
<div class="t" style="left:310.1px;top:844.5px;font-size:13px;color:#e0e0e0;line-height:14.95px;">an hour ago</div>
<div class="t" style="left:36.0px;top:871.5px;font-size:13px;color:#e0e0e0;line-height:14.95px;transform:scaleX(1.0038);transform-origin:0 0;">sourcelist_vmain_testpasses_strict...</div>
<div class="t" style="left:310.1px;top:871.5px;font-size:13px;color:#e0e0e0;line-height:14.95px;">an hour ago</div>
<div class="t" style="left:36.0px;top:898.5px;font-size:13px;color:#e0e0e0;line-height:14.95px;transform:scaleX(1.0038);transform-origin:0 0;">spectra_summary_2.jpg</div>
<div class="t" style="left:310.8px;top:898.5px;font-size:13px;color:#e0e0e0;line-height:14.95px;">2 hours ago</div>
<div class="t" style="left:36.0px;top:925.5px;font-size:13px;color:#e0e0e0;line-height:14.95px;transform:scaleX(1.0038);transform-origin:0 0;">spectra_summary.jpg</div>
<div class="t" style="left:310.8px;top:925.5px;font-size:13px;color:#e0e0e0;line-height:14.95px;">2 hours ago</div>
</div>
<div style="position:absolute;left:431px;top:242px;width:5px;height:916px;background:#cf6a3f;border-radius:1px;"></div>
<div style="position:absolute;left:436px;top:153px;width:1417px;height:1020px;background:#616161;"></div>
<div style="position:absolute;left:444px;top:184px;width:1403px;height:983px;background:#111111;"></div>
<div style="position:absolute;left:443px;top:158px;width:216px;height:26px;background:#424242;"></div>
<div style="position:absolute;left:659px;top:158px;width:215px;height:26px;background:#212121;"></div>
<div style="position:absolute;left:658px;top:158px;width:216px;height:2px;background:#2196f3;"></div>
<svg style="position:absolute;left:443px;top:158px" width="431" height="26" viewBox="443 158 431 26">
<rect x="453" y="165.2" width="11.8" height="11.6" rx="1" fill="#6c6c6c"/>
<path d="M459 166.8 Q460.8 168.5 460.8 172.5 L462.3 174.8 L460.6 174.2 V173.5 H457.4 V174.2 L455.7 174.8 L457.2 172.5 Q457.2 168.5 459 166.8 Z" fill="#f0f0f0"/>
<rect x="458.1" y="170" width="1.8" height="0.9" fill="#6c6c6c"/><rect x="458" y="175.2" width="2" height="1" fill="#f0f0f0"/>
<path d="M637.5 166.5 L646.5 175.5 M646.5 166.5 L637.5 175.5" stroke="#e0e0e0" stroke-width="1.3"/>
<rect x="668.5" y="165.8" width="11.3" height="11" fill="none" stroke="#f37726" stroke-width="1.2"/>
<path d="M670.8 167.8 H677.5 V174.5 L674.2 172 L670.8 174.5 Z" fill="#f37726"/>
<path d="M853 166.8 L861.5 175.3 M861.5 166.8 L853 175.3" stroke="#e0e0e0" stroke-width="1.3"/>
</svg>
<div class="t" style="left:470.0px;top:165.8px;font-size:13px;color:#e0e0e0;line-height:14.95px;transform:scaleX(0.9869);transform-origin:0 0;">Launcher</div>
<div style="position:absolute;left:685px;top:160px;width:160px;height:24px;overflow:hidden;"><div class="t" style="left:0.0px;top:5.7px;font-size:13px;color:#ffffff;line-height:14.95px;">07_emission_line_properties</div></div>
<div style="position:absolute;left:444px;top:184px;width:1403px;height:28px;background:#212121;"></div>
<div style="position:absolute;left:444px;top:212px;width:1403px;height:1px;background:#505050;"></div>
<svg style="position:absolute;left:444px;top:184px" width="400" height="28" viewBox="444 184 400 28">
<path d="M455 192.3 Q455 191.8 455.5 191.8 H464.2 L467.3 194.8 V203.5 Q467.3 204 466.8 204 H455.5 Q455 204 455 203.5 Z" fill="#e6e6e6"/>
<rect x="457" y="193.5" width="7" height="3.2" fill="#212121"/><circle cx="461.2" cy="200.3" r="1.9" fill="#212121"/>
<path d="M491 192.8 V203.2 M485.8 198 H496.2" stroke="#e6e6e6" stroke-width="1.8"/>
<circle cx="517" cy="203" r="1.9" fill="none" stroke="#e6e6e6" stroke-width="1.4"/><circle cx="517" cy="193" r="1.9" fill="none" stroke="#e6e6e6" stroke-width="1.4"/>
<path d="M518.5 194.5 L527 203.3 M518.5 201.5 L527 192.7" stroke="#e6e6e6" stroke-width="1.5"/>
<path d="M548.5 203 H545.7 V192.6 H553.8 V194.5" fill="none" stroke="#e6e6e6" stroke-width="1.3"/>
<rect x="548.3" y="195.1" width="8.3" height="10" rx="1" fill="none" stroke="#e6e6e6" stroke-width="1.4"/>
<rect x="575.5" y="192.8" width="11" height="11.5" rx="1.3" fill="none" stroke="#e6e6e6" stroke-width="1.4"/>
<rect x="578.2" y="191" width="5.6" height="3.5" rx="0.6" fill="#e6e6e6"/>
<path d="M608 193.2 L615.5 198 L608 202.8 Z" fill="#e6e6e6"/>
<rect x="636.8" y="193.8" width="8.4" height="8.4" fill="#e6e6e6"/>
<path d="M675.5 195.3 A5.2 5.2 0 1 0 676.3 200.5" fill="none" stroke="#e6e6e6" stroke-width="1.4"/>
<path d="M673 193.5 L676.2 194.8 L675 198" fill="none" stroke="#e6e6e6" stroke-width="1.4"/>
<path d="M771.5 196 L775.5 200 L779.5 196" fill="none" stroke="#e6e6e6" stroke-width="1.4"/>
</svg>
<div class="t" style="left:700.3px;top:191.5px;font-size:13px;color:#e0e0e0;line-height:14.95px;transform:scaleX(1.0589);transform-origin:0 0;">Markdown</div>
<div class="t" style="left:1755.5px;top:191.6px;font-size:13px;color:#e0e0e0;line-height:14.95px;transform:scaleX(0.9939);transform-origin:0 0;">Python 3</div>
<svg style="position:absolute;left:1818px;top:187px" width="22" height="22" viewBox="1818 187 22 22"><circle cx="1829" cy="197.9" r="6.4" fill="none" stroke="#e0e0e0" stroke-width="1.5"/></svg>
<div style="position:absolute;left:444px;top:213px;width:1403px;height:954px;overflow:hidden;">
<div style="position:absolute;left:87px;top:-10px;width:1289px;height:483px;background:#212121;border:1px solid #666;border-top:none;box-sizing:border-box;"></div>
<div class="code" style="left:92.6px;top:-8.40px;">    ax1.<span style="color:#3f9be8">arrow</span>(x_cand_OIII[i],y_cand_OIII[i],<span style="color:#66bb6a">0</span>,<span style="color:#aa22ff">-</span><span style="color:#66bb6a">0.1</span>,head_width<span style="color:#aa22ff">=</span><span style="color:#66bb6a">0.02</span>, head_length<span style="color:#aa22ff">=</span><span style="color:#66bb6a">0.05</span>,facecolor<span style="color:#aa22ff">=</span><span style="color:#d32f2f">&#x27;tab:blue&#x27;</span>,edgecolor<span style="color:#aa22ff">=</span><span style="color:#d32f2f">&#x27;tab:blue&#x27;</span>)</div>
<div class="code" style="left:92.6px;top:25.60px;">ax1.<span style="color:#3f9be8">grid</span>()</div>
<div class="code" style="left:92.6px;top:42.60px;">ax1.<span style="color:#3f9be8">legend</span>()</div>
<div class="code" style="left:92.6px;top:59.60px;">ax1.<span style="color:#3f9be8">set_xlabel</span>(<span style="color:#d32f2f">&#x27;$L_{12}$ (ergs/s)&#x27;</span>)</div>
<div class="code" style="left:92.6px;top:76.60px;">ax1.<span style="color:#3f9be8">set_ylabel</span>(<span style="color:#d32f2f">&#x27;$L_{OIII}$ ($L_\odot$)&#x27;</span>)</div>
<div class="code" style="left:92.6px;top:110.60px;">ax2.<span style="color:#3f9be8">plot</span>(x_QSO2_Ha,y_QSO2_Ha,<span style="color:#d32f2f">&#x27;o&#x27;</span>,markersize<span style="color:#aa22ff">=</span><span style="color:#66bb6a">3</span>,color<span style="color:#aa22ff">=</span><span style="color:#d32f2f">&#x27;tab:orange&#x27;</span>,alpha<span style="color:#aa22ff">=</span><span style="color:#66bb6a">0.5</span>,label<span style="color:#aa22ff">=</span><span style="color:#d32f2f">&#x27;QSO2&#x27;</span>)</div>
<div class="code" style="left:92.6px;top:127.60px;">ax2.<span style="color:#3f9be8">plot</span>(x_fit_Ha,y_fit_QSO2_Ha,<span style="color:#d32f2f">&#x27;-&#x27;</span>,color<span style="color:#aa22ff">=</span><span style="color:#d32f2f">&#x27;tab:orange&#x27;</span>,label<span style="color:#aa22ff">=</span><span style="color:#d32f2f">&#x27;QSO2 fit&#x27;</span>)</div>
<div class="code" style="left:92.6px;top:144.60px;">ax2.<span style="color:#3f9be8">plot</span>(x_cand_Ha,y_cand_Ha,<span style="color:#d32f2f">&#x27;o&#x27;</span>,color<span style="color:#aa22ff">=</span><span style="color:#d32f2f">&#x27;tab:blue&#x27;</span>,label<span style="color:#aa22ff">=</span><span style="color:#d32f2f">&#x27;candidates&#x27;</span>)<i style="color:#408080">#,markersize=3,alpha=0.5)</i></div>
<div class="code" style="left:92.6px;top:161.60px;">ax2.<span style="color:#3f9be8">plot</span>(x_fit_Ha,y_fit_cand_Ha,<span style="color:#d32f2f">&#x27;-&#x27;</span>,color<span style="color:#aa22ff">=</span><span style="color:#d32f2f">&#x27;tab:blue&#x27;</span>,label<span style="color:#aa22ff">=</span><span style="color:#d32f2f">&#x27;candidates fit&#x27;</span>)</div>
<div class="code" style="left:92.6px;top:178.60px;">ax2.<span style="color:#3f9be8">plot</span>(x_mean_rat_Ha,y_mean_rat_Ha,<span style="color:#d32f2f">&#x27;--&#x27;</span>,color<span style="color:#aa22ff">=</span><span style="color:#d32f2f">&#x27;tab:blue&#x27;</span>,label<span style="color:#aa22ff">=</span><span style="color:#d32f2f">&#x27;mean LHa/L12&#x27;</span>)</div>
<div class="code" style="left:92.6px;top:195.60px;">ax2.<span style="color:#3f9be8">plot</span>(x_mean_def_Ha,y_mean_def_Ha,<span style="color:#d32f2f">&#x27;--&#x27;</span>,color<span style="color:#aa22ff">=</span><span style="color:#d32f2f">&#x27;tab:red&#x27;</span>,label<span style="color:#aa22ff">=</span><span style="color:#d32f2f">&#x27;mean LQSO2/Lcand&#x27;</span>)</div>
<div class="code" style="left:92.6px;top:229.60px;">label_cands <span style="color:#aa22ff">=</span> np.<span style="color:#3f9be8">arange</span>(<span style="color:#66bb6a">1</span>,<span style="color:#43a047">len</span>(x_cand_Ha)<span style="color:#aa22ff">+</span><span style="color:#66bb6a">1</span>)</div>
<div class="code" style="left:92.6px;top:246.60px;"><b style="color:#4caf50">for</b> i,current_label <b style="color:#4caf50">in</b> <span style="color:#43a047">enumerate</span>(label_cands):</div>
<div class="code" style="left:92.6px;top:263.60px;">    <b style="color:#4caf50">if</b> <b style="color:#4caf50">not</b> np.<span style="color:#3f9be8">isnan</span>(y_cand_Ha[i]):</div>
<div class="code" style="left:92.6px;top:280.60px;">        ax2.<span style="color:#3f9be8">annotate</span>(current_label,(x_cand_Ha[i],y_cand_Ha[i]),(x_cand_Ha[i]<span style="color:#aa22ff">-</span><span style="color:#66bb6a">0.05</span>,y_cand_Ha[i]<span style="color:#aa22ff">-</span><span style="color:#66bb6a">0.01</span>))</div>
<div class="code" style="left:92.6px;top:297.60px;">    <b style="color:#4caf50">if</b> y_cand_Ha_limflag[i]:</div>
<div class="code" style="left:92.6px;top:314.60px;">        ax2.<span style="color:#3f9be8">arrow</span>(x_cand_Ha[i],y_cand_Ha[i],<span style="color:#66bb6a">0</span>,<span style="color:#aa22ff">-</span><span style="color:#66bb6a">0.1</span>,head_width<span style="color:#aa22ff">=</span><span style="color:#66bb6a">0.02</span>, head_length<span style="color:#aa22ff">=</span><span style="color:#66bb6a">0.05</span>,facecolor<span style="color:#aa22ff">=</span><span style="color:#d32f2f">&#x27;tab:blue&#x27;</span>,edgecolor<span style="color:#aa22ff">=</span><span style="color:#d32f2f">&#x27;tab:blue&#x27;</span>)</div>
<div class="code" style="left:92.6px;top:348.60px;">ax2.<span style="color:#3f9be8">grid</span>()</div>
<div class="code" style="left:92.6px;top:365.60px;">ax2.<span style="color:#3f9be8">legend</span>()</div>
<div class="code" style="left:92.6px;top:382.60px;">ax2.<span style="color:#3f9be8">set_xlabel</span>(<span style="color:#d32f2f">&#x27;$L_{12}$ (ergs/s)&#x27;</span>)</div>
<div class="code" style="left:92.6px;top:399.60px;"><i style="color:#408080">#ax2.set_ylabel(&#x27;$L_{Ha}$ ($L_\odot$)&#x27;)</i></div>
<div class="code" style="left:92.6px;top:416.60px;">ax2.<span style="color:#3f9be8">set_ylabel</span>(<span style="color:#d32f2f">&#x27;$L_{Ha}$ (ergs/s)&#x27;</span>)</div>
<div class="code" style="left:92.6px;top:450.60px;">plt.<span style="color:#3f9be8">savefig</span>(<span style="color:#d32f2f">&#x27;emission_line_comparison.jpg&#x27;</span>)</div>
</div>
<div style="position:absolute;left:1841px;top:1025px;width:6px;height:132px;background:#cf6a3f;border-radius:1px;"></div>
<svg style="position:absolute;left:531px;top:691px;will-change:transform" width="896" height="433" viewBox="531 691 896 433" font-family="Liberation Sans, sans-serif" fill="#000">
<rect x="531" y="691" width="896" height="433" fill="#fff"/>
<defs><clipPath id="c1"><rect x="575.5" y="701.5" width="381.0" height="381.0"/></clipPath><clipPath id="c2"><rect x="1032.5" y="701.5" width="380" height="381"/></clipPath></defs>
<text x="593.50" y="1097.20" text-anchor="middle" font-size="11" >44.00</text>
<text x="636.50" y="1097.20" text-anchor="middle" font-size="11" >44.25</text>
<text x="680.50" y="1097.20" text-anchor="middle" font-size="11" >44.50</text>
<text x="723.50" y="1097.20" text-anchor="middle" font-size="11" >44.75</text>
<text x="767.50" y="1097.20" text-anchor="middle" font-size="11" >45.00</text>
<text x="810.50" y="1097.20" text-anchor="middle" font-size="11" >45.25</text>
<text x="853.50" y="1097.20" text-anchor="middle" font-size="11" >45.50</text>
<text x="897.50" y="1097.20" text-anchor="middle" font-size="11" >45.75</text>
<text x="940.50" y="1097.20" text-anchor="middle" font-size="11" >46.00</text>
<text x="568.80" y="1027.10" text-anchor="end" font-size="11" >7</text>
<text x="568.80" y="944.10" text-anchor="end" font-size="11" >8</text>
<text x="568.80" y="860.10" text-anchor="end" font-size="11" >9</text>
<text x="568.80" y="776.10" text-anchor="end" font-size="11" >10</text>
<line x1="593.50" y1="701.5" x2="593.50" y2="1082.5" stroke="#b0b0b0" stroke-width="1"/>
<line x1="593.50" y1="1082.5" x2="593.50" y2="1086.0" stroke="#000" stroke-width="0.9"/>
<line x1="636.50" y1="701.5" x2="636.50" y2="1082.5" stroke="#b0b0b0" stroke-width="1"/>
<line x1="636.50" y1="1082.5" x2="636.50" y2="1086.0" stroke="#000" stroke-width="0.9"/>
<line x1="680.50" y1="701.5" x2="680.50" y2="1082.5" stroke="#b0b0b0" stroke-width="1"/>
<line x1="680.50" y1="1082.5" x2="680.50" y2="1086.0" stroke="#000" stroke-width="0.9"/>
<line x1="723.50" y1="701.5" x2="723.50" y2="1082.5" stroke="#b0b0b0" stroke-width="1"/>
<line x1="723.50" y1="1082.5" x2="723.50" y2="1086.0" stroke="#000" stroke-width="0.9"/>
<line x1="767.50" y1="701.5" x2="767.50" y2="1082.5" stroke="#b0b0b0" stroke-width="1"/>
<line x1="767.50" y1="1082.5" x2="767.50" y2="1086.0" stroke="#000" stroke-width="0.9"/>
<line x1="810.50" y1="701.5" x2="810.50" y2="1082.5" stroke="#b0b0b0" stroke-width="1"/>
<line x1="810.50" y1="1082.5" x2="810.50" y2="1086.0" stroke="#000" stroke-width="0.9"/>
<line x1="853.50" y1="701.5" x2="853.50" y2="1082.5" stroke="#b0b0b0" stroke-width="1"/>
<line x1="853.50" y1="1082.5" x2="853.50" y2="1086.0" stroke="#000" stroke-width="0.9"/>
<line x1="897.50" y1="701.5" x2="897.50" y2="1082.5" stroke="#b0b0b0" stroke-width="1"/>
<line x1="897.50" y1="1082.5" x2="897.50" y2="1086.0" stroke="#000" stroke-width="0.9"/>
<line x1="940.50" y1="701.5" x2="940.50" y2="1082.5" stroke="#b0b0b0" stroke-width="1"/>
<line x1="940.50" y1="1082.5" x2="940.50" y2="1086.0" stroke="#000" stroke-width="0.9"/>
<line x1="575.5" y1="1022.50" x2="956.5" y2="1022.50" stroke="#b0b0b0" stroke-width="1"/>
<line x1="572.0" y1="1022.50" x2="575.5" y2="1022.50" stroke="#000" stroke-width="0.9"/>
<line x1="575.5" y1="939.50" x2="956.5" y2="939.50" stroke="#b0b0b0" stroke-width="1"/>
<line x1="572.0" y1="939.50" x2="575.5" y2="939.50" stroke="#000" stroke-width="0.9"/>
<line x1="575.5" y1="855.50" x2="956.5" y2="855.50" stroke="#b0b0b0" stroke-width="1"/>
<line x1="572.0" y1="855.50" x2="575.5" y2="855.50" stroke="#000" stroke-width="0.9"/>
<line x1="575.5" y1="771.50" x2="956.5" y2="771.50" stroke="#b0b0b0" stroke-width="1"/>
<line x1="572.0" y1="771.50" x2="575.5" y2="771.50" stroke="#000" stroke-width="0.9"/>
<g clip-path="url(#c1)">
<rect x="684.7" y="755.7" width="3.2" height="3.2" rx="0.9" fill="#ffe3c8" stroke="#ff9a45" stroke-width="1"/>
<rect x="750.5" y="760.6" width="3.2" height="3.2" rx="0.9" fill="#ffe3c8" stroke="#ff9a45" stroke-width="1"/>
<rect x="809.6" y="755.7" width="3.2" height="3.2" rx="0.9" fill="#ffe3c8" stroke="#ff9a45" stroke-width="1"/>
<rect x="699.6" y="780.5" width="3.2" height="3.2" rx="0.9" fill="#ffe3c8" stroke="#ff9a45" stroke-width="1"/>
<rect x="712.8" y="781.5" width="3.2" height="3.2" rx="0.9" fill="#ffe3c8" stroke="#ff9a45" stroke-width="1"/>
<rect x="703.6" y="787.7" width="3.2" height="3.2" rx="0.9" fill="#ffe3c8" stroke="#ff9a45" stroke-width="1"/>
<rect x="730.7" y="784.5" width="3.2" height="3.2" rx="0.9" fill="#ffe3c8" stroke="#ff9a45" stroke-width="1"/>
<rect x="730.7" y="786.5" width="3.2" height="3.2" rx="0.9" fill="#ffe3c8" stroke="#ff9a45" stroke-width="1"/>
<rect x="696.4" y="801.6" width="3.2" height="3.2" rx="0.9" fill="#ffe3c8" stroke="#ff9a45" stroke-width="1"/>
<rect x="717.5" y="804.6" width="3.2" height="3.2" rx="0.9" fill="#ffe3c8" stroke="#ff9a45" stroke-width="1"/>
<rect x="765.7" y="797.6" width="3.2" height="3.2" rx="0.9" fill="#ffe3c8" stroke="#ff9a45" stroke-width="1"/>
<rect x="770.6" y="803.6" width="3.2" height="3.2" rx="0.9" fill="#ffe3c8" stroke="#ff9a45" stroke-width="1"/>
<rect x="791.7" y="793.7" width="3.2" height="3.2" rx="0.9" fill="#ffe3c8" stroke="#ff9a45" stroke-width="1"/>
<rect x="701.6" y="816.5" width="3.2" height="3.2" rx="0.9" fill="#ffe3c8" stroke="#ff9a45" stroke-width="1"/>
<rect x="750.5" y="810.5" width="3.2" height="3.2" rx="0.9" fill="#ffe3c8" stroke="#ff9a45" stroke-width="1"/>
<rect x="759.5" y="812.5" width="3.2" height="3.2" rx="0.9" fill="#ffe3c8" stroke="#ff9a45" stroke-width="1"/>
<rect x="816.8" y="819.5" width="3.2" height="3.2" rx="0.9" fill="#ffe3c8" stroke="#ff9a45" stroke-width="1"/>
<rect x="701.6" y="825.4" width="3.2" height="3.2" rx="0.9" fill="#ffe3c8" stroke="#ff9a45" stroke-width="1"/>
<rect x="682.7" y="828.7" width="3.2" height="3.2" rx="0.9" fill="#ffe3c8" stroke="#ff9a45" stroke-width="1"/>
<rect x="686.5" y="828.7" width="3.2" height="3.2" rx="0.9" fill="#ffe3c8" stroke="#ff9a45" stroke-width="1"/>
<rect x="688.0" y="829.7" width="3.2" height="3.2" rx="0.9" fill="#ffe3c8" stroke="#ff9a45" stroke-width="1"/>
<rect x="702.6" y="830.7" width="3.2" height="3.2" rx="0.9" fill="#ffe3c8" stroke="#ff9a45" stroke-width="1"/>
<rect x="716.5" y="823.5" width="3.2" height="3.2" rx="0.9" fill="#ffe3c8" stroke="#ff9a45" stroke-width="1"/>
<rect x="720.0" y="830.7" width="3.2" height="3.2" rx="0.9" fill="#ffe3c8" stroke="#ff9a45" stroke-width="1"/>
<rect x="721.7" y="828.9" width="3.2" height="3.2" rx="0.9" fill="#ffe3c8" stroke="#ff9a45" stroke-width="1"/>
<rect x="695.7" y="834.6" width="3.2" height="3.2" rx="0.9" fill="#ffe3c8" stroke="#ff9a45" stroke-width="1"/>
<rect x="711.5" y="836.6" width="3.2" height="3.2" rx="0.9" fill="#ffe3c8" stroke="#ff9a45" stroke-width="1"/>
<rect x="679.3" y="835.6" width="3.2" height="3.2" rx="0.9" fill="#ffe3c8" stroke="#ff9a45" stroke-width="1"/>
<rect x="680.8" y="837.6" width="3.2" height="3.2" rx="0.9" fill="#ffe3c8" stroke="#ff9a45" stroke-width="1"/>
<rect x="767.7" y="837.6" width="3.2" height="3.2" rx="0.9" fill="#ffe3c8" stroke="#ff9a45" stroke-width="1"/>
<rect x="682.7" y="843.8" width="3.2" height="3.2" rx="0.9" fill="#ffe3c8" stroke="#ff9a45" stroke-width="1"/>
<rect x="704.3" y="843.6" width="3.2" height="3.2" rx="0.9" fill="#ffe3c8" stroke="#ff9a45" stroke-width="1"/>
<rect x="705.8" y="842.6" width="3.2" height="3.2" rx="0.9" fill="#ffe3c8" stroke="#ff9a45" stroke-width="1"/>
<rect x="728.7" y="841.8" width="3.2" height="3.2" rx="0.9" fill="#ffe3c8" stroke="#ff9a45" stroke-width="1"/>
<rect x="728.7" y="844.6" width="3.2" height="3.2" rx="0.9" fill="#ffe3c8" stroke="#ff9a45" stroke-width="1"/>
<rect x="735.9" y="840.3" width="3.2" height="3.2" rx="0.9" fill="#ffe3c8" stroke="#ff9a45" stroke-width="1"/>
<rect x="677.3" y="845.8" width="3.2" height="3.2" rx="0.9" fill="#ffe3c8" stroke="#ff9a45" stroke-width="1"/>
<rect x="687.7" y="849.8" width="3.2" height="3.2" rx="0.9" fill="#ffe3c8" stroke="#ff9a45" stroke-width="1"/>
<rect x="690.9" y="849.8" width="3.2" height="3.2" rx="0.9" fill="#ffe3c8" stroke="#ff9a45" stroke-width="1"/>
<rect x="705.8" y="848.5" width="3.2" height="3.2" rx="0.9" fill="#ffe3c8" stroke="#ff9a45" stroke-width="1"/>
<rect x="708.1" y="849.8" width="3.2" height="3.2" rx="0.9" fill="#ffe3c8" stroke="#ff9a45" stroke-width="1"/>
<rect x="716.5" y="849.5" width="3.2" height="3.2" rx="0.9" fill="#ffe3c8" stroke="#ff9a45" stroke-width="1"/>
<rect x="712.8" y="851.5" width="3.2" height="3.2" rx="0.9" fill="#ffe3c8" stroke="#ff9a45" stroke-width="1"/>
<rect x="726.7" y="852.7" width="3.2" height="3.2" rx="0.9" fill="#ffe3c8" stroke="#ff9a45" stroke-width="1"/>
<rect x="677.3" y="852.7" width="3.2" height="3.2" rx="0.9" fill="#ffe3c8" stroke="#ff9a45" stroke-width="1"/>
<rect x="720.0" y="855.5" width="3.2" height="3.2" rx="0.9" fill="#ffe3c8" stroke="#ff9a45" stroke-width="1"/>
<rect x="767.7" y="854.5" width="3.2" height="3.2" rx="0.9" fill="#ffe3c8" stroke="#ff9a45" stroke-width="1"/>
<rect x="734.9" y="856.7" width="3.2" height="3.2" rx="0.9" fill="#ffe3c8" stroke="#ff9a45" stroke-width="1"/>
<rect x="676.8" y="857.7" width="3.2" height="3.2" rx="0.9" fill="#ffe3c8" stroke="#ff9a45" stroke-width="1"/>
<rect x="712.8" y="857.7" width="3.2" height="3.2" rx="0.9" fill="#ffe3c8" stroke="#ff9a45" stroke-width="1"/>
<rect x="714.0" y="858.7" width="3.2" height="3.2" rx="0.9" fill="#ffe3c8" stroke="#ff9a45" stroke-width="1"/>
<rect x="716.5" y="861.7" width="3.2" height="3.2" rx="0.9" fill="#ffe3c8" stroke="#ff9a45" stroke-width="1"/>
<rect x="706.8" y="863.7" width="3.2" height="3.2" rx="0.9" fill="#ffe3c8" stroke="#ff9a45" stroke-width="1"/>
<rect x="726.7" y="863.7" width="3.2" height="3.2" rx="0.9" fill="#ffe3c8" stroke="#ff9a45" stroke-width="1"/>
<rect x="734.9" y="861.7" width="3.2" height="3.2" rx="0.9" fill="#ffe3c8" stroke="#ff9a45" stroke-width="1"/>
<rect x="740.8" y="864.7" width="3.2" height="3.2" rx="0.9" fill="#ffe3c8" stroke="#ff9a45" stroke-width="1"/>
<rect x="747.8" y="860.7" width="3.2" height="3.2" rx="0.9" fill="#ffe3c8" stroke="#ff9a45" stroke-width="1"/>
<rect x="769.9" y="863.7" width="3.2" height="3.2" rx="0.9" fill="#ffe3c8" stroke="#ff9a45" stroke-width="1"/>
<rect x="851.8" y="841.6" width="3.2" height="3.2" rx="0.9" fill="#ffe3c8" stroke="#ff9a45" stroke-width="1"/>
<rect x="691.7" y="870.6" width="3.2" height="3.2" rx="0.9" fill="#ffe3c8" stroke="#ff9a45" stroke-width="1"/>
<rect x="708.6" y="870.6" width="3.2" height="3.2" rx="0.9" fill="#ffe3c8" stroke="#ff9a45" stroke-width="1"/>
<rect x="725.7" y="872.6" width="3.2" height="3.2" rx="0.9" fill="#ffe3c8" stroke="#ff9a45" stroke-width="1"/>
<rect x="849.8" y="866.7" width="3.2" height="3.2" rx="0.9" fill="#ffe3c8" stroke="#ff9a45" stroke-width="1"/>
<rect x="758.7" y="881.5" width="3.2" height="3.2" rx="0.9" fill="#ffe3c8" stroke="#ff9a45" stroke-width="1"/>
<rect x="692.7" y="882.5" width="3.2" height="3.2" rx="0.9" fill="#ffe3c8" stroke="#ff9a45" stroke-width="1"/>
<rect x="685.7" y="886.5" width="3.2" height="3.2" rx="0.9" fill="#ffe3c8" stroke="#ff9a45" stroke-width="1"/>
<rect x="703.6" y="889.5" width="3.2" height="3.2" rx="0.9" fill="#ffe3c8" stroke="#ff9a45" stroke-width="1"/>
<rect x="777.8" y="890.7" width="3.2" height="3.2" rx="0.9" fill="#ffe3c8" stroke="#ff9a45" stroke-width="1"/>
<rect x="773.6" y="896.7" width="3.2" height="3.2" rx="0.9" fill="#ffe3c8" stroke="#ff9a45" stroke-width="1"/>
<rect x="703.6" y="898.7" width="3.2" height="3.2" rx="0.9" fill="#ffe3c8" stroke="#ff9a45" stroke-width="1"/>
<rect x="698.6" y="900.7" width="3.2" height="3.2" rx="0.9" fill="#ffe3c8" stroke="#ff9a45" stroke-width="1"/>
<rect x="913.6" y="914.6" width="3.2" height="3.2" rx="0.9" fill="#ffe3c8" stroke="#ff9a45" stroke-width="1"/>
<rect x="687.7" y="927.7" width="3.2" height="3.2" rx="0.9" fill="#ffe3c8" stroke="#ff9a45" stroke-width="1"/>
<rect x="706.8" y="940.8" width="3.2" height="3.2" rx="0.9" fill="#ffe3c8" stroke="#ff9a45" stroke-width="1"/>
<rect x="729.9" y="959.9" width="3.2" height="3.2" rx="0.9" fill="#ffe3c8" stroke="#ff9a45" stroke-width="1"/>
<line x1="592.7" y1="857.1" x2="939.1" y2="824.1" stroke="#ff7f0e" stroke-width="1.5"/>
<line x1="592.7" y1="1055.9" x2="939.1" y2="924.1" stroke="#1f77b4" stroke-width="1.5"/>
<line x1="592.7" y1="1064.1" x2="939.1" y2="897.3" stroke="#1f77b4" stroke-width="1.5" stroke-dasharray="5.5,2.4"/>
<line x1="592.7" y1="1020.2" x2="939.1" y2="986.6" stroke="#cc3526" stroke-width="1.5" stroke-dasharray="5.5,2.4"/>
<circle cx="701.4" cy="978.1" r="3.6" fill="#1f77b4"/>
<path d="M701.0 978.1 V986.5 H699.65 L701.4 990.7 L703.15 986.5 H701.8 V978.1 Z" fill="#1f77b4" stroke="#1f77b4" stroke-width="0.8"/>
<circle cx="703.3" cy="989.4" r="3.6" fill="#1f77b4"/>
<path d="M702.9 989.4 V997.8 H701.55 L703.3 1002.0 L705.05 997.8 H703.6999999999999 V989.4 Z" fill="#1f77b4" stroke="#1f77b4" stroke-width="0.8"/>
<circle cx="729.3" cy="977.4" r="3.6" fill="#1f77b4"/>
<path d="M728.9 977.4 V985.8 H727.55 L729.3 990.0 L731.05 985.8 H729.6999999999999 V977.4 Z" fill="#1f77b4" stroke="#1f77b4" stroke-width="0.8"/>
<circle cx="766.1" cy="957.4" r="3.6" fill="#1f77b4"/>
<path d="M765.7 957.4 V965.8 H764.35 L766.1 970.0 L767.85 965.8 H766.5 V957.4 Z" fill="#1f77b4" stroke="#1f77b4" stroke-width="0.8"/>
<circle cx="774.4" cy="961.3" r="3.6" fill="#1f77b4"/>
<path d="M774.0 961.3 V969.6999999999999 H772.65 L774.4 973.9 L776.15 969.6999999999999 H774.8 V961.3 Z" fill="#1f77b4" stroke="#1f77b4" stroke-width="0.8"/>
<circle cx="772.5" cy="971.1" r="3.6" fill="#1f77b4"/>
<path d="M772.1 971.1 V979.5 H770.75 L772.5 983.7 L774.25 979.5 H772.9 V971.1 Z" fill="#1f77b4" stroke="#1f77b4" stroke-width="0.8"/>
<circle cx="816.6" cy="952.6" r="3.6" fill="#1f77b4"/>
<path d="M816.2 952.6 V961.0 H814.85 L816.6 965.2 L818.35 961.0 H817.0 V952.6 Z" fill="#1f77b4" stroke="#1f77b4" stroke-width="0.8"/>
<circle cx="808.2" cy="964.4" r="3.6" fill="#1f77b4"/>
<path d="M807.8000000000001 964.4 V972.8 H806.45 L808.2 977.0 L809.95 972.8 H808.6 V964.4 Z" fill="#1f77b4" stroke="#1f77b4" stroke-width="0.8"/>
<circle cx="821.5" cy="977.4" r="3.6" fill="#1f77b4"/>
<path d="M821.1 977.4 V985.8 H819.75 L821.5 990.0 L823.25 985.8 H821.9 V977.4 Z" fill="#1f77b4" stroke="#1f77b4" stroke-width="0.8"/>
<circle cx="801.4" cy="996.3" r="3.6" fill="#1f77b4"/>
<path d="M801.0 996.3 V1004.6999999999999 H799.65 L801.4 1008.9 L803.15 1004.6999999999999 H801.8 V996.3 Z" fill="#1f77b4" stroke="#1f77b4" stroke-width="0.8"/>
<circle cx="688.1" cy="1021.1" r="3.6" fill="#1f77b4"/>
<path d="M687.7 1021.1 V1029.5 H686.35 L688.1 1033.7 L689.85 1029.5 H688.5 V1021.1 Z" fill="#1f77b4" stroke="#1f77b4" stroke-width="0.8"/>
<circle cx="705.3" cy="1028" r="3.6" fill="#1f77b4"/>
<path d="M704.9 1028 V1036.4 H703.55 L705.3 1040.6 L707.05 1036.4 H705.6999999999999 V1028 Z" fill="#1f77b4" stroke="#1f77b4" stroke-width="0.8"/>
<circle cx="708" cy="1030.9" r="3.6" fill="#1f77b4"/>
<path d="M707.6 1030.9 V1039.3000000000002 H706.25 L708 1043.5 L709.75 1039.3000000000002 H708.4 V1030.9 Z" fill="#1f77b4" stroke="#1f77b4" stroke-width="0.8"/>
<circle cx="714.6" cy="1029.4" r="3.6" fill="#1f77b4"/>
<path d="M714.2 1029.4 V1037.8000000000002 H712.85 L714.6 1042.0 L716.35 1037.8000000000002 H715.0 V1029.4 Z" fill="#1f77b4" stroke="#1f77b4" stroke-width="0.8"/>
<circle cx="716.4" cy="1034.3" r="3.6" fill="#1f77b4"/>
<path d="M716.0 1034.3 V1042.7 H714.65 L716.4 1046.8999999999999 L718.15 1042.7 H716.8 V1034.3 Z" fill="#1f77b4" stroke="#1f77b4" stroke-width="0.8"/>
<circle cx="739.1" cy="1037.5" r="3.6" fill="#1f77b4"/>
<path d="M738.7 1037.5 V1045.9 H737.35 L739.1 1050.1 L740.85 1045.9 H739.5 V1037.5 Z" fill="#1f77b4" stroke="#1f77b4" stroke-width="0.8"/>
<circle cx="776.4" cy="1031.6" r="3.6" fill="#1f77b4"/>
<path d="M776.0 1031.6 V1040.0 H774.65 L776.4 1044.1999999999998 L778.15 1040.0 H776.8 V1031.6 Z" fill="#1f77b4" stroke="#1f77b4" stroke-width="0.8"/>
<circle cx="893.1" cy="946.2" r="3.6" fill="#1f77b4"/>
<path d="M892.7 946.2 V954.6 H891.35 L893.1 958.8000000000001 L894.85 954.6 H893.5 V946.2 Z" fill="#1f77b4" stroke="#1f77b4" stroke-width="0.8"/>
<text x="693.60" y="980.10" text-anchor="start" font-size="11.2" >4</text>
<text x="695.50" y="991.40" text-anchor="start" font-size="11.2" >17</text>
<text x="721.50" y="979.40" text-anchor="start" font-size="11.2" >11</text>
<text x="758.30" y="959.40" text-anchor="start" font-size="11.2" >7</text>
<text x="766.60" y="963.30" text-anchor="start" font-size="11.2" >9</text>
<text x="764.70" y="973.10" text-anchor="start" font-size="11.2" >16</text>
<text x="808.80" y="954.60" text-anchor="start" font-size="11.2" >14</text>
<text x="800.40" y="966.40" text-anchor="start" font-size="11.2" >10</text>
<text x="813.70" y="979.40" text-anchor="start" font-size="11.2" >1</text>
<text x="793.60" y="998.30" text-anchor="start" font-size="11.2" >6</text>
<text x="680.30" y="1023.10" text-anchor="start" font-size="11.2" >8</text>
<text x="697.50" y="1030.00" text-anchor="start" font-size="11.2" >3</text>
<text x="700.20" y="1032.90" text-anchor="start" font-size="11.2" >18</text>
<text x="706.80" y="1031.40" text-anchor="start" font-size="11.2" >13</text>
<text x="708.60" y="1036.30" text-anchor="start" font-size="11.2" >12</text>
<text x="731.30" y="1039.50" text-anchor="start" font-size="11.2" >15</text>
<text x="768.60" y="1033.60" text-anchor="start" font-size="11.2" >2</text>
<text x="885.30" y="948.20" text-anchor="start" font-size="11.2" >5</text>
</g>
<rect x="575.5" y="701.5" width="381.0" height="381.0" fill="none" stroke="#000" stroke-width="1"/>
<rect x="817.5" y="706.5" width="134" height="92.7" rx="2" fill="#fff" fill-opacity="0.8" stroke="#cccccc" stroke-width="1"/>
<circle cx="831.3" cy="715.1" r="1.6" fill="#ffd9b8" stroke="#ff9a45" stroke-width="1"/>
<line x1="821" y1="730" x2="841.7" y2="730" stroke="#ff7f0e" stroke-width="1.5"/>
<circle cx="831.3" cy="745.1" r="3.6" fill="#1f77b4"/>
<line x1="821" y1="760" x2="841.7" y2="760" stroke="#1f77b4" stroke-width="1.5"/>
<line x1="821" y1="775.2" x2="841.7" y2="775.2" stroke="#1f77b4" stroke-width="1.5" stroke-dasharray="5.5,2.4"/>
<line x1="821" y1="790" x2="841.7" y2="790" stroke="#cc3526" stroke-width="1.5" stroke-dasharray="5.5,2.4"/>
<text x="849.00" y="718.90" text-anchor="start" font-size="11" >QSO2</text>
<text x="849.00" y="733.80" text-anchor="start" font-size="11" >QSO2 fit</text>
<text x="849.00" y="748.90" text-anchor="start" font-size="11" >candidates</text>
<text x="849.00" y="763.80" text-anchor="start" font-size="11" >candidates fit</text>
<text x="849.00" y="779.00" text-anchor="start" font-size="11" >mean LOIII/L12</text>
<text x="849.00" y="793.80" text-anchor="start" font-size="11" >mean LQSO2/Lcand</text>
<text x="737.6" y="1113" font-size="10.6"><tspan font-style="italic">L</tspan><tspan font-size="7.5" dy="1.2">12</tspan><tspan dy="-1.2" letter-spacing="0.6"> (ergs/s)</tspan></text>
<text transform="translate(546.5,914) rotate(-90)" font-size="10.6"><tspan font-style="italic">L</tspan><tspan font-size="7.5" font-style="italic" dy="1.5">OIII</tspan><tspan dy="-1.5"> (</tspan><tspan font-style="italic">L</tspan><tspan font-size="7.5" dy="1.5">⊙</tspan><tspan dy="-1.5">)</tspan></text>
<text x="1038.50" y="1097.20" text-anchor="middle" font-size="11" >44.2</text>
<text x="1084.50" y="1097.20" text-anchor="middle" font-size="11" >44.4</text>
<text x="1131.50" y="1097.20" text-anchor="middle" font-size="11" >44.6</text>
<text x="1177.50" y="1097.20" text-anchor="middle" font-size="11" >44.8</text>
<text x="1223.50" y="1097.20" text-anchor="middle" font-size="11" >45.0</text>
<text x="1270.50" y="1097.20" text-anchor="middle" font-size="11" >45.2</text>
<text x="1316.50" y="1097.20" text-anchor="middle" font-size="11" >45.4</text>
<text x="1363.50" y="1097.20" text-anchor="middle" font-size="11" >45.6</text>
<text x="1409.50" y="1097.20" text-anchor="middle" font-size="11" >45.8</text>
<text x="1024.80" y="1058.10" text-anchor="end" font-size="11" >41.00</text>
<text x="1024.80" y="1013.10" text-anchor="end" font-size="11" >41.25</text>
<text x="1024.80" y="968.10" text-anchor="end" font-size="11" >41.50</text>
<text x="1024.80" y="923.10" text-anchor="end" font-size="11" >41.75</text>
<text x="1024.80" y="878.10" text-anchor="end" font-size="11" >42.00</text>
<text x="1024.80" y="834.10" text-anchor="end" font-size="11" >42.25</text>
<text x="1024.80" y="789.10" text-anchor="end" font-size="11" >42.50</text>
<text x="1024.80" y="744.10" text-anchor="end" font-size="11" >42.75</text>
<line x1="1038.50" y1="701.5" x2="1038.50" y2="1082.5" stroke="#b0b0b0" stroke-width="1"/>
<line x1="1038.50" y1="1082.5" x2="1038.50" y2="1086.0" stroke="#000" stroke-width="0.9"/>
<line x1="1084.50" y1="701.5" x2="1084.50" y2="1082.5" stroke="#b0b0b0" stroke-width="1"/>
<line x1="1084.50" y1="1082.5" x2="1084.50" y2="1086.0" stroke="#000" stroke-width="0.9"/>
<line x1="1131.50" y1="701.5" x2="1131.50" y2="1082.5" stroke="#b0b0b0" stroke-width="1"/>
<line x1="1131.50" y1="1082.5" x2="1131.50" y2="1086.0" stroke="#000" stroke-width="0.9"/>
<line x1="1177.50" y1="701.5" x2="1177.50" y2="1082.5" stroke="#b0b0b0" stroke-width="1"/>
<line x1="1177.50" y1="1082.5" x2="1177.50" y2="1086.0" stroke="#000" stroke-width="0.9"/>
<line x1="1223.50" y1="701.5" x2="1223.50" y2="1082.5" stroke="#b0b0b0" stroke-width="1"/>
<line x1="1223.50" y1="1082.5" x2="1223.50" y2="1086.0" stroke="#000" stroke-width="0.9"/>
<line x1="1270.50" y1="701.5" x2="1270.50" y2="1082.5" stroke="#b0b0b0" stroke-width="1"/>
<line x1="1270.50" y1="1082.5" x2="1270.50" y2="1086.0" stroke="#000" stroke-width="0.9"/>
<line x1="1316.50" y1="701.5" x2="1316.50" y2="1082.5" stroke="#b0b0b0" stroke-width="1"/>
<line x1="1316.50" y1="1082.5" x2="1316.50" y2="1086.0" stroke="#000" stroke-width="0.9"/>
<line x1="1363.50" y1="701.5" x2="1363.50" y2="1082.5" stroke="#b0b0b0" stroke-width="1"/>
<line x1="1363.50" y1="1082.5" x2="1363.50" y2="1086.0" stroke="#000" stroke-width="0.9"/>
<line x1="1409.50" y1="701.5" x2="1409.50" y2="1082.5" stroke="#b0b0b0" stroke-width="1"/>
<line x1="1409.50" y1="1082.5" x2="1409.50" y2="1086.0" stroke="#000" stroke-width="0.9"/>
<line x1="1032.5" y1="1053.50" x2="1412.5" y2="1053.50" stroke="#b0b0b0" stroke-width="1"/>
<line x1="1029.0" y1="1053.50" x2="1032.5" y2="1053.50" stroke="#000" stroke-width="0.9"/>
<line x1="1032.5" y1="1008.50" x2="1412.5" y2="1008.50" stroke="#b0b0b0" stroke-width="1"/>
<line x1="1029.0" y1="1008.50" x2="1032.5" y2="1008.50" stroke="#000" stroke-width="0.9"/>
<line x1="1032.5" y1="963.50" x2="1412.5" y2="963.50" stroke="#b0b0b0" stroke-width="1"/>
<line x1="1029.0" y1="963.50" x2="1032.5" y2="963.50" stroke="#000" stroke-width="0.9"/>
<line x1="1032.5" y1="918.50" x2="1412.5" y2="918.50" stroke="#b0b0b0" stroke-width="1"/>
<line x1="1029.0" y1="918.50" x2="1032.5" y2="918.50" stroke="#000" stroke-width="0.9"/>
<line x1="1032.5" y1="873.50" x2="1412.5" y2="873.50" stroke="#b0b0b0" stroke-width="1"/>
<line x1="1029.0" y1="873.50" x2="1032.5" y2="873.50" stroke="#000" stroke-width="0.9"/>
<line x1="1032.5" y1="829.50" x2="1412.5" y2="829.50" stroke="#b0b0b0" stroke-width="1"/>
<line x1="1029.0" y1="829.50" x2="1032.5" y2="829.50" stroke="#000" stroke-width="0.9"/>
<line x1="1032.5" y1="784.50" x2="1412.5" y2="784.50" stroke="#b0b0b0" stroke-width="1"/>
<line x1="1029.0" y1="784.50" x2="1032.5" y2="784.50" stroke="#000" stroke-width="0.9"/>
<line x1="1032.5" y1="739.50" x2="1412.5" y2="739.50" stroke="#b0b0b0" stroke-width="1"/>
<line x1="1029.0" y1="739.50" x2="1032.5" y2="739.50" stroke="#000" stroke-width="0.9"/>
<g clip-path="url(#c2)">
<rect x="1202.7" y="736.8" width="3.2" height="3.2" rx="0.9" fill="#ffe3c8" stroke="#ff9a45" stroke-width="1"/>
<rect x="1222.8" y="743.7" width="3.2" height="3.2" rx="0.9" fill="#ffe3c8" stroke="#ff9a45" stroke-width="1"/>
<rect x="1227.6" y="767.8" width="3.2" height="3.2" rx="0.9" fill="#ffe3c8" stroke="#ff9a45" stroke-width="1"/>
<rect x="1139.8" y="784.8" width="3.2" height="3.2" rx="0.9" fill="#ffe3c8" stroke="#ff9a45" stroke-width="1"/>
<rect x="1144.9" y="783.8" width="3.2" height="3.2" rx="0.9" fill="#ffe3c8" stroke="#ff9a45" stroke-width="1"/>
<rect x="1156.6" y="796.7" width="3.2" height="3.2" rx="0.9" fill="#ffe3c8" stroke="#ff9a45" stroke-width="1"/>
<rect x="1108.6" y="797.7" width="3.2" height="3.2" rx="0.9" fill="#ffe3c8" stroke="#ff9a45" stroke-width="1"/>
<rect x="1111.7" y="802.8" width="3.2" height="3.2" rx="0.9" fill="#ffe3c8" stroke="#ff9a45" stroke-width="1"/>
<rect x="1105.6" y="805.8" width="3.2" height="3.2" rx="0.9" fill="#ffe3c8" stroke="#ff9a45" stroke-width="1"/>
<rect x="1125.9" y="812.7" width="3.2" height="3.2" rx="0.9" fill="#ffe3c8" stroke="#ff9a45" stroke-width="1"/>
<rect x="1116.8" y="815.7" width="3.2" height="3.2" rx="0.9" fill="#ffe3c8" stroke="#ff9a45" stroke-width="1"/>
<rect x="1150.5" y="815.7" width="3.2" height="3.2" rx="0.9" fill="#ffe3c8" stroke="#ff9a45" stroke-width="1"/>
<rect x="1156.6" y="810.6" width="3.2" height="3.2" rx="0.9" fill="#ffe3c8" stroke="#ff9a45" stroke-width="1"/>
<rect x="1111.7" y="823.8" width="3.2" height="3.2" rx="0.9" fill="#ffe3c8" stroke="#ff9a45" stroke-width="1"/>
<rect x="1182.7" y="832.7" width="3.2" height="3.2" rx="0.9" fill="#ffe3c8" stroke="#ff9a45" stroke-width="1"/>
<rect x="1117.8" y="853.8" width="3.2" height="3.2" rx="0.9" fill="#ffe3c8" stroke="#ff9a45" stroke-width="1"/>
<rect x="1145.7" y="849.7" width="3.2" height="3.2" rx="0.9" fill="#ffe3c8" stroke="#ff9a45" stroke-width="1"/>
<rect x="1116.8" y="888.8" width="3.2" height="3.2" rx="0.9" fill="#ffe3c8" stroke="#ff9a45" stroke-width="1"/>
<rect x="1337.7" y="788.8" width="3.2" height="3.2" rx="0.9" fill="#ffe3c8" stroke="#ff9a45" stroke-width="1"/>
<circle cx="1120.4" cy="1004.2" r="1.6" fill="#ffd9b8" stroke="#ff9a45" stroke-width="1"/>
<line x1="1049.4" y1="861.2" x2="1395.3" y2="718.4" stroke="#ff7f0e" stroke-width="1.5"/>
<line x1="1049.4" y1="1023.8" x2="1395.3" y2="917.8" stroke="#1f77b4" stroke-width="1.5"/>
<line x1="1049.4" y1="1064.3" x2="1393.8" y2="798.5" stroke="#1f77b4" stroke-width="1.5" stroke-dasharray="5.5,2.4"/>
<line x1="1049.4" y1="1041" x2="1395.3" y2="898.5" stroke="#cc3526" stroke-width="1.5" stroke-dasharray="5.5,2.4"/>
<circle cx="1155.9" cy="959.3" r="3.6" fill="#1f77b4"/>
<circle cx="1140.4" cy="986.2" r="3.6" fill="#1f77b4"/>
<circle cx="1151.6" cy="1035.4" r="3.6" fill="#1f77b4"/>
<path d="M1151.25 1035.4 V1053.3000000000002 H1149.3 L1151.6 1062.3000000000002 L1153.8999999999999 1053.3000000000002 H1151.9499999999998 V1035.4 Z" fill="#1f77b4" stroke="#1f77b4" stroke-width="0.6"/>
<text x="1144.10" y="961.70" text-anchor="start" font-size="11.2" >12</text>
<text x="1128.60" y="988.60" text-anchor="start" font-size="11.2" >3</text>
<text x="1139.80" y="1037.80" text-anchor="start" font-size="11.2" >13</text>
</g>
<rect x="1032.5" y="701.5" width="380.0" height="381.0" fill="none" stroke="#000" stroke-width="1"/>
<rect x="1273.6" y="984.5" width="133.6" height="92.3" rx="2" fill="#fff" fill-opacity="0.8" stroke="#cccccc" stroke-width="1"/>
<circle cx="1287" cy="992.3" r="1.6" fill="#ffd9b8" stroke="#ff9a45" stroke-width="1"/>
<line x1="1276.4" y1="1007.3" x2="1297.7" y2="1007.3" stroke="#ff7f0e" stroke-width="1.5"/>
<circle cx="1287" cy="1022.5" r="3.6" fill="#1f77b4"/>
<line x1="1276.4" y1="1037.2" x2="1297.7" y2="1037.2" stroke="#1f77b4" stroke-width="1.5"/>
<line x1="1276.4" y1="1052.2" x2="1297.7" y2="1052.2" stroke="#1f77b4" stroke-width="1.5" stroke-dasharray="5.5,2.4"/>
<line x1="1276.4" y1="1067.1" x2="1297.7" y2="1067.1" stroke="#cc3526" stroke-width="1.5" stroke-dasharray="5.5,2.4"/>
<text x="1305.30" y="996.10" text-anchor="start" font-size="11" >QSO2</text>
<text x="1305.30" y="1011.10" text-anchor="start" font-size="11" >QSO2 fit</text>
<text x="1305.30" y="1026.30" text-anchor="start" font-size="11" >candidates</text>
<text x="1305.30" y="1041.00" text-anchor="start" font-size="11" >candidates fit</text>
<text x="1305.30" y="1056.00" text-anchor="start" font-size="11" >mean LHa/L12</text>
<text x="1305.30" y="1070.90" text-anchor="start" font-size="11" >mean LQSO2/Lcand</text>
<text x="1194.5" y="1113" font-size="10.6"><tspan font-style="italic">L</tspan><tspan font-size="7.5" dy="1.2">12</tspan><tspan dy="-1.2" letter-spacing="0.6"> (ergs/s)</tspan></text>
<text transform="translate(987.5,922.5) rotate(-90)" font-size="10.6"><tspan font-style="italic">L</tspan><tspan font-size="7.5" font-style="italic" dy="1.2">Hα</tspan><tspan dy="-1.2" letter-spacing="0.6"> (ergs/s)</tspan></text>
</svg>
</body></html>
